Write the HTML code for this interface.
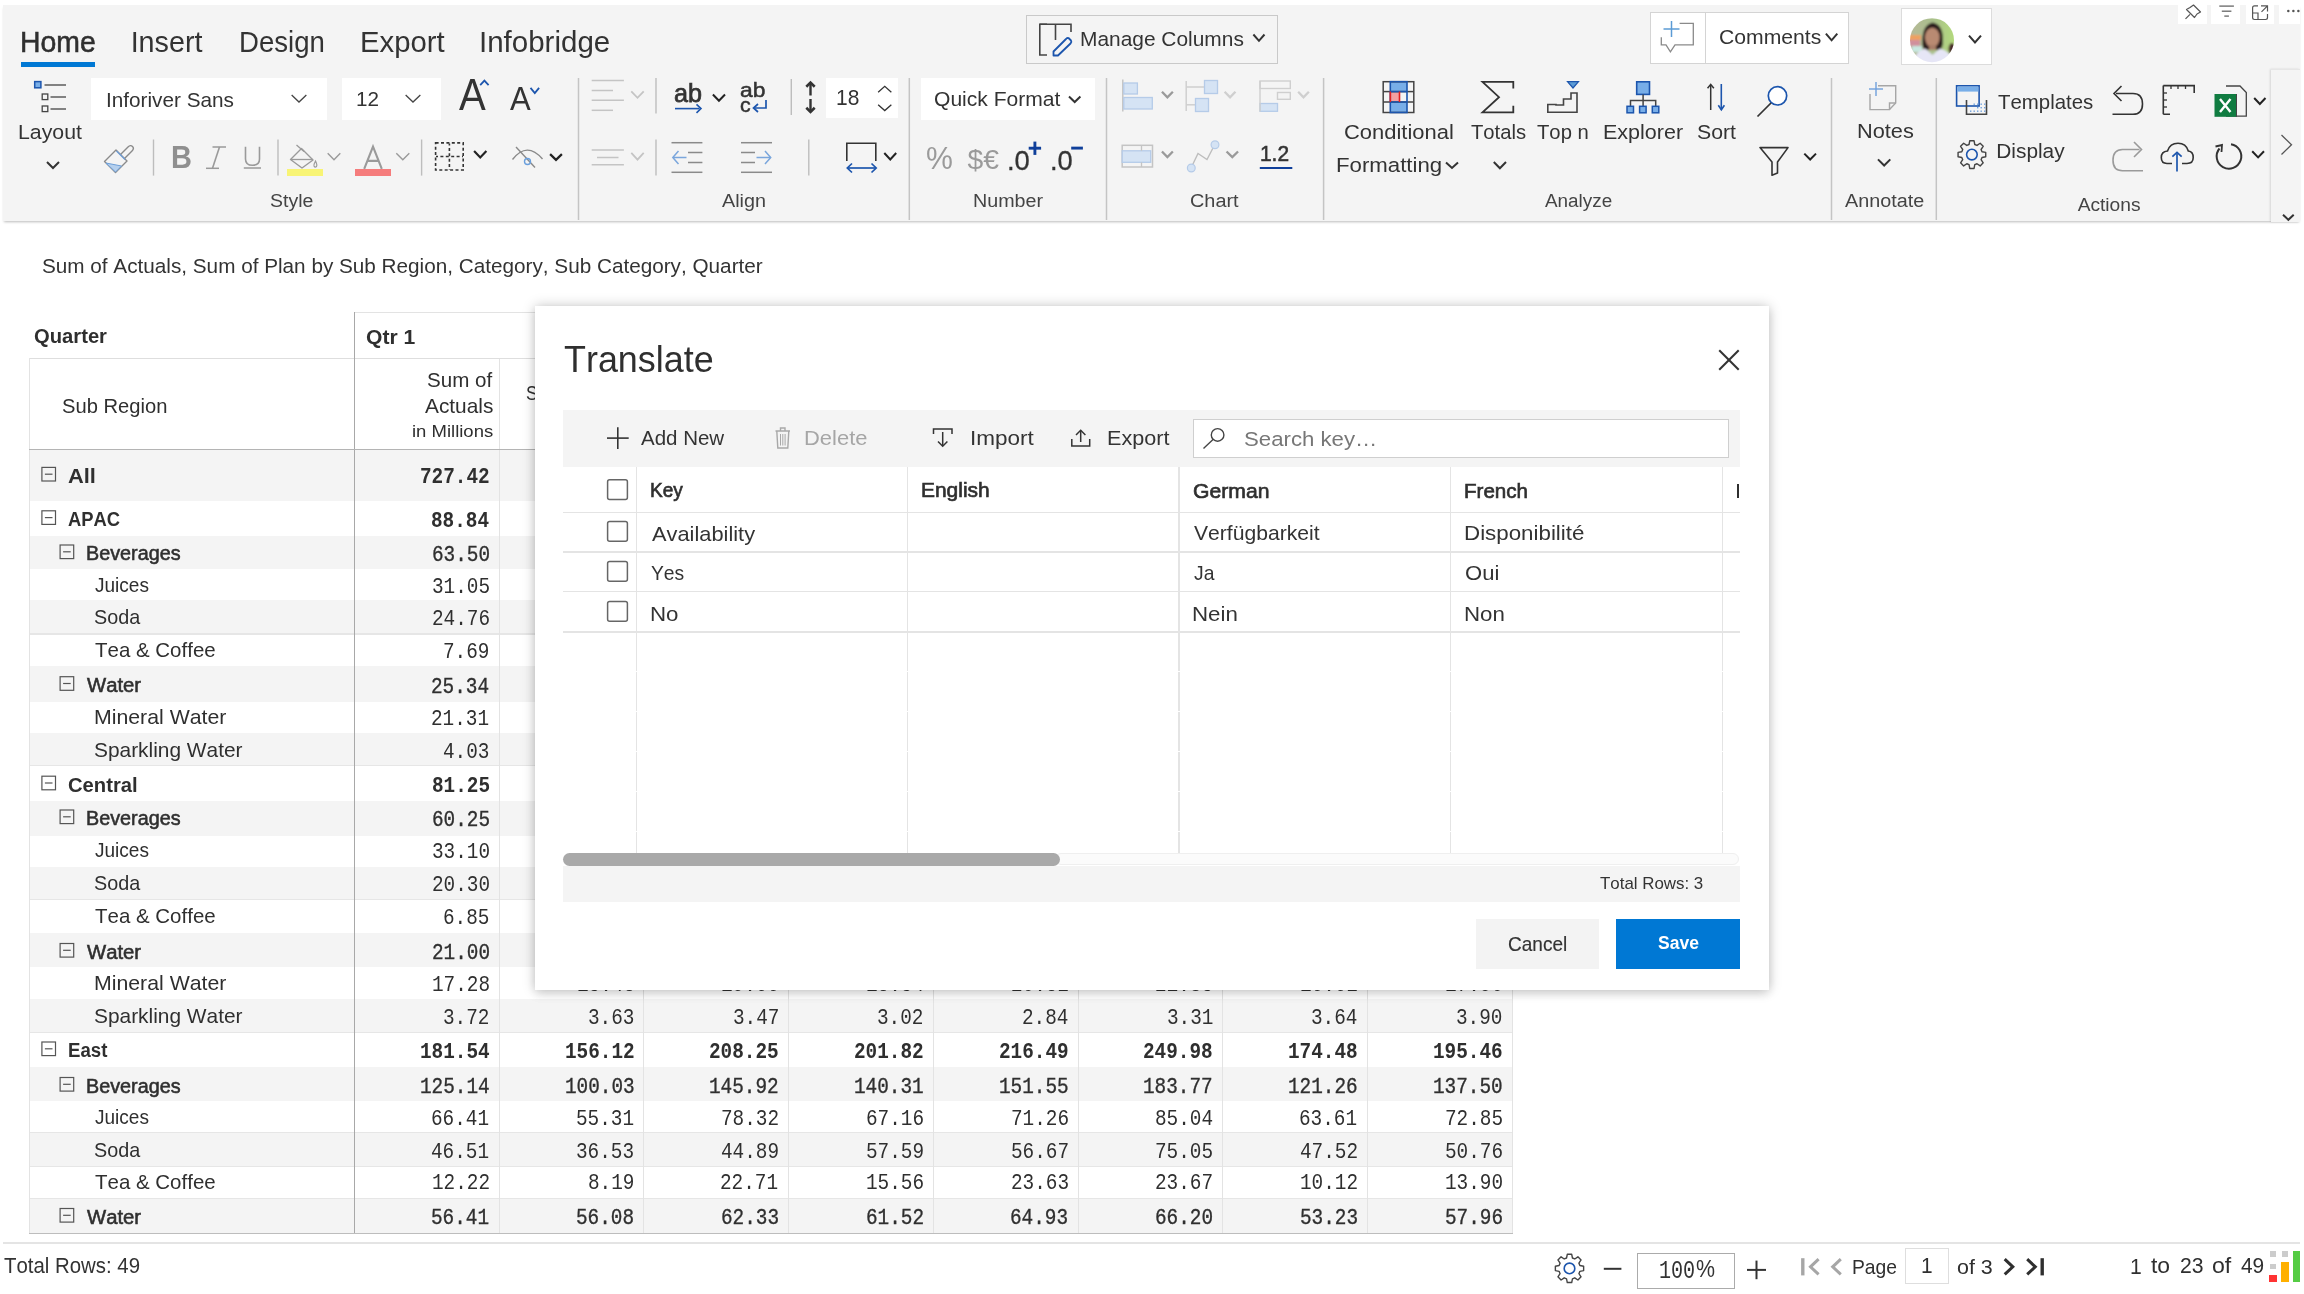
<!DOCTYPE html><html><head><meta charset="utf-8"><title>Translate</title><style>
html,body{margin:0;padding:0;width:2304px;height:1294px;overflow:hidden;background:#fff}
body{position:relative}
.t{position:absolute;white-space:pre;font-kerning:none;transform-origin:0 0}
.r{position:absolute}
svg.ov{position:absolute;left:0;top:0;width:2304px;height:1294px;overflow:visible}
</style></head><body><div id="root" style="position:absolute;left:0;top:0;width:2304px;height:1294px;will-change:transform">
<!-- ribbon -->
<div class="r" style="left:3.00px;top:5.00px;width:2297.00px;height:216.00px;background:#f4f4f4;box-shadow:0 2.2px 2.5px -1px rgba(0,0,0,0.27);"></div>
<div class="r" style="left:2178.00px;top:0.00px;width:28.80px;height:24.30px;background:#ffffff;"></div>
<div class="r" style="left:2211.40px;top:0.00px;width:29.10px;height:24.30px;background:#ffffff;"></div>
<div class="r" style="left:2245.70px;top:0.00px;width:28.30px;height:24.30px;background:#ffffff;"></div>
<div class="r" style="left:2278.80px;top:0.00px;width:21.20px;height:24.30px;background:#ffffff;"></div>
<div class="r" style="left:21.00px;top:62.00px;width:74.00px;height:5.00px;background:#0078d4;"></div>
<div class="r" style="left:1025.50px;top:15.10px;width:252.70px;height:48.60px;background:transparent;box-sizing:border-box;border:1.5px solid #c9c9c9;"></div>
<div class="r" style="left:1650.40px;top:11.50px;width:198.50px;height:52.00px;background:#fff;box-sizing:border-box;border:1.2px solid #d4d4d4;"></div>
<div class="r" style="left:1705.00px;top:11.50px;width:1.20px;height:52.00px;background:#d4d4d4;"></div>
<div class="r" style="left:1901.30px;top:8.30px;width:91.10px;height:56.80px;background:#fff;box-sizing:border-box;border:1.2px solid #dcdcdc;"></div>
<div class="r" style="left:91.30px;top:78.00px;width:235.70px;height:42.40px;background:#fff;"></div>
<div class="r" style="left:342.00px;top:78.00px;width:99.00px;height:42.40px;background:#fff;"></div>
<div class="r" style="left:287.00px;top:168.80px;width:36.00px;height:6.80px;background:#f8f475;"></div>
<div class="r" style="left:355.00px;top:168.80px;width:36.40px;height:6.80px;background:#f57c7c;"></div>
<div class="r" style="left:826.00px;top:78.00px;width:71.80px;height:39.50px;background:#fff;"></div>
<div class="r" style="left:921.00px;top:78.00px;width:173.80px;height:42.40px;background:#fff;"></div>
<div class="r" style="left:2271.00px;top:68.50px;width:29.00px;height:152.50px;background:#f4f4f4;box-shadow:-1.5px 0 2px rgba(0,0,0,0.12);border-top:1px solid #e6e6e6;"></div>
<svg class="ov" width="2304" height="1294" viewBox="0 0 2304 1294">
<path d="M2193.5,5 L2200.5,12 L2197,14 L2194.5,17.5 L2186.5,9.5 L2190,7.5 Z" fill="none" stroke="#555" stroke-width="1.2" stroke-linejoin="round"/>
<line x1="2185.50" y1="18.80" x2="2190.00" y2="14.30" stroke="#555" stroke-width="1.20" stroke-linecap="butt"/>
<line x1="2219.30" y1="6.10" x2="2233.90" y2="6.10" stroke="#666" stroke-width="1.30" stroke-linecap="butt"/>
<line x1="2221.80" y1="11.20" x2="2231.40" y2="11.20" stroke="#666" stroke-width="1.30" stroke-linecap="butt"/>
<line x1="2224.30" y1="16.10" x2="2228.90" y2="16.10" stroke="#666" stroke-width="1.30" stroke-linecap="butt"/>
<path d="M2258,5.8 H2254.5 Q2252.6,5.8 2252.6,7.7 V17.6 Q2252.6,19.5 2254.5,19.5 H2265.6 Q2267.5,19.5 2267.5,17.6 V14" fill="none" stroke="#555" stroke-width="1.2"/>
<path d="M2252.6,13 H2258 V19.5" fill="none" stroke="#555" stroke-width="1.2"/>
<path d="M2261,5.8 H2267.5 V11.5 M2267.5,5.8 L2261.5,11.8" fill="none" stroke="#555" stroke-width="1.2"/>
<circle cx="2288.3" cy="11" r="1.25" fill="#555"/>
<circle cx="2293.4" cy="11" r="1.25" fill="#555"/>
<circle cx="2298.4" cy="11" r="1.25" fill="#555"/>
<path d="M1047,24.3 H1039.8 V55 H1047" fill="none" stroke="#444" stroke-width="1.6"/>
<path d="M1039.8,24.3 H1071 V32 M1055.5,24.3 V40" fill="none" stroke="#444" stroke-width="1.6"/>
<path d="M1068.5,38 L1071,40.5 Q1072,42 1070.5,43.5 L1058,55.5 L1053.5,55.5 L1053.5,51.5 L1066,39 Q1067.3,37.5 1068.5,38 Z" fill="none" stroke="#1c55ad" stroke-width="1.8" stroke-linejoin="round"/>
<polyline points="1253.40,34.50 1258.95,40.80 1264.50,34.50" fill="none" stroke="#333" stroke-width="2.00" stroke-linecap="butt" stroke-linejoin="miter"/>
<path d="M1679.6,23.3 H1693.3 V44.8 H1675 L1670.4,51.8 L1666,44.8 H1661.3 V37.3" fill="none" stroke="#8a8a8a" stroke-width="1.3"/>
<line x1="1671.50" y1="21.00" x2="1671.50" y2="37.00" stroke="#5b9bd5" stroke-width="1.50" stroke-linecap="butt"/>
<line x1="1663.50" y1="29.00" x2="1679.50" y2="29.00" stroke="#5b9bd5" stroke-width="1.50" stroke-linecap="butt"/>
<polyline points="1825.90,33.60 1831.60,40.30 1837.30,33.60" fill="none" stroke="#333" stroke-width="2.00" stroke-linecap="butt" stroke-linejoin="miter"/>
<defs><clipPath id="avc"><circle cx="1932" cy="40.2" r="22"/></clipPath>
<linearGradient id="avbg" x1="0" y1="0" x2="1" y2="0"><stop offset="0" stop-color="#b8b89a"/><stop offset="0.5" stop-color="#a9bf8c"/><stop offset="1" stop-color="#b4dc7c"/></linearGradient></defs>
<filter id="avblur" x="-10%" y="-10%" width="120%" height="120%"><feGaussianBlur stdDeviation="0.9"/></filter><g clip-path="url(#avc)"><g filter="url(#avblur)">
<rect x="1908" y="17" width="48" height="48" fill="url(#avbg)"/>
<rect x="1908" y="35" width="13" height="5" fill="#eea060"/>
<rect x="1908" y="40" width="12" height="6" fill="#d0909c"/>
<rect x="1912" y="46" width="10" height="6" fill="#c8e8e0"/>
<path d="M1922.5,46 Q1921,25 1932.5,22.5 Q1944,24 1943,44 L1941,50 L1924,50 Z" fill="#2a1c1a"/>
<ellipse cx="1932.3" cy="37.5" rx="7.3" ry="9.8" fill="#b98a72"/>
<rect x="1929" y="45" width="7" height="5" fill="#a87d68"/>
<path d="M1913,64 Q1914,52 1925,48.5 L1932.5,55 L1940,48.5 Q1951,51 1954,64 Z" fill="#e6e6f6"/>
<ellipse cx="1952" cy="49" rx="3.5" ry="6" fill="#4a2a2a"/>
</g></g>
<polyline points="1969.00,35.70 1975.00,42.40 1981.00,35.70" fill="none" stroke="#333" stroke-width="2.00" stroke-linecap="butt" stroke-linejoin="miter"/>
<line x1="578.50" y1="78.00" x2="578.50" y2="220.00" stroke="#c4c4c4" stroke-width="1.50" stroke-linecap="butt"/>
<line x1="909.30" y1="78.00" x2="909.30" y2="220.00" stroke="#c4c4c4" stroke-width="1.50" stroke-linecap="butt"/>
<line x1="1106.50" y1="78.00" x2="1106.50" y2="220.00" stroke="#c4c4c4" stroke-width="1.50" stroke-linecap="butt"/>
<line x1="1323.60" y1="78.00" x2="1323.60" y2="220.00" stroke="#c4c4c4" stroke-width="1.50" stroke-linecap="butt"/>
<line x1="1831.50" y1="78.00" x2="1831.50" y2="220.00" stroke="#c4c4c4" stroke-width="1.50" stroke-linecap="butt"/>
<line x1="1936.30" y1="78.00" x2="1936.30" y2="220.00" stroke="#c4c4c4" stroke-width="1.50" stroke-linecap="butt"/>
<rect x="34.7" y="81.6" width="6.2" height="6.2" fill="#78aee8" stroke="#1c55ad" stroke-width="1.5"/>
<line x1="44.50" y1="85.00" x2="66.00" y2="85.00" stroke="#444" stroke-width="1.30" stroke-linecap="butt"/>
<rect x="42.2" y="94" width="5.6" height="5.6" fill="none" stroke="#444" stroke-width="1.3"/>
<rect x="42.2" y="106" width="5.6" height="5.6" fill="none" stroke="#444" stroke-width="1.3"/>
<line x1="50.50" y1="97.00" x2="66.00" y2="97.00" stroke="#444" stroke-width="1.30" stroke-linecap="butt"/>
<line x1="50.50" y1="109.00" x2="66.00" y2="109.00" stroke="#444" stroke-width="1.30" stroke-linecap="butt"/>
<polyline points="47.00,162.00 53.00,168.00 59.00,162.00" fill="none" stroke="#333" stroke-width="2.00" stroke-linecap="butt" stroke-linejoin="miter"/>
<polyline points="291.65,95.05 299.00,102.05 306.35,95.05" fill="none" stroke="#444" stroke-width="1.30" stroke-linecap="butt" stroke-linejoin="miter"/>
<polyline points="405.65,95.05 413.00,102.05 420.35,95.05" fill="none" stroke="#444" stroke-width="1.30" stroke-linecap="butt" stroke-linejoin="miter"/>
<polyline points="480.20,85.10 484.40,80.60 488.60,85.10" fill="none" stroke="#1c55ad" stroke-width="1.80" stroke-linejoin="miter"/>
<polyline points="530.50,87.90 534.80,93.10 539.10,87.90" fill="none" stroke="#1c55ad" stroke-width="1.80" stroke-linecap="butt" stroke-linejoin="miter"/>
<path d="M104.5,161.5 L116,150 L127,161 L115.5,172.5 Z" fill="none" stroke="#8a8a8a" stroke-width="1.4" stroke-linejoin="round"/>
<path d="M106,163 L121.5,166 L115.5,172 Z" fill="#b5d0ee" stroke="#6e9fd8" stroke-width="1"/>
<path d="M120,155 L128,147 Q130.5,144.5 132.5,146.5 Q134.5,148.5 132,151 L124,159" fill="none" stroke="#8a8a8a" stroke-width="1.4" stroke-linejoin="round"/>
<line x1="116.50" y1="151.00" x2="125.00" y2="159.50" stroke="#6e9fd8" stroke-width="1.20" stroke-linecap="butt"/>
<line x1="153.50" y1="139.50" x2="153.50" y2="175.60" stroke="#bdbdbd" stroke-width="1.40" stroke-linecap="butt"/>
<line x1="212.50" y1="147.00" x2="226.00" y2="147.00" stroke="#9a9a9a" stroke-width="1.50" stroke-linecap="butt"/>
<line x1="206.00" y1="168.30" x2="219.00" y2="168.30" stroke="#9a9a9a" stroke-width="1.50" stroke-linecap="butt"/>
<line x1="219.50" y1="147.00" x2="212.50" y2="168.30" stroke="#9a9a9a" stroke-width="1.60" stroke-linecap="butt"/>
<path d="M245.5,146.7 V159 Q245.5,165.3 252.5,165.3 Q259.5,165.3 259.5,159 V146.7" fill="none" stroke="#9a9a9a" stroke-width="1.6"/>
<line x1="243.80" y1="168.00" x2="261.00" y2="168.00" stroke="#9a9a9a" stroke-width="1.50" stroke-linecap="butt"/>
<line x1="278.00" y1="139.50" x2="278.00" y2="175.60" stroke="#bdbdbd" stroke-width="1.40" stroke-linecap="butt"/>
<path d="M290.5,159.5 L301.5,148.5 L313,160 L302,168 Z" fill="none" stroke="#9a9a9a" stroke-width="1.4" stroke-linejoin="round"/>
<line x1="291.00" y1="159.50" x2="313.00" y2="159.50" stroke="#9a9a9a" stroke-width="1.30" stroke-linecap="butt"/>
<line x1="296.50" y1="145.00" x2="304.00" y2="151.50" stroke="#9a9a9a" stroke-width="1.30" stroke-linecap="butt"/>
<path d="M315.5,161 Q313.5,164.5 314,166 Q315,168 316.5,166.5 Q317.5,165 315.5,161 Z" fill="none" stroke="#9a9a9a" stroke-width="1.2"/>
<polyline points="327.70,153.30 334.00,159.80 340.30,153.30" fill="none" stroke="#9a9a9a" stroke-width="1.40" stroke-linecap="butt" stroke-linejoin="miter"/>
<path d="M364.2,168.8 L373,146.5 L381.8,168.8 M367.3,160.9 H378.7" fill="none" stroke="#9a9a9a" stroke-width="2.1"/>
<polyline points="396.30,153.30 402.80,159.80 409.30,153.30" fill="none" stroke="#9a9a9a" stroke-width="1.40" stroke-linecap="butt" stroke-linejoin="miter"/>
<line x1="421.60" y1="139.50" x2="421.60" y2="175.60" stroke="#bdbdbd" stroke-width="1.40" stroke-linecap="butt"/>
<path d="M435.6,142.9 H463.2 V170 H435.6 Z" fill="none" stroke="#333" stroke-width="1.6" stroke-dasharray="3,2.4" stroke-linecap="butt"/>
<line x1="449.4" y1="143.5" x2="449.4" y2="170" stroke="#333" stroke-width="1.6" stroke-dasharray="3,2.4" stroke-dashoffset="1"/>
<line x1="436" y1="156.5" x2="463" y2="156.5" stroke="#333" stroke-width="1.6" stroke-dasharray="3,2.4" stroke-dashoffset="1"/>
<polyline points="474.10,151.10 480.25,157.40 486.40,151.10" fill="none" stroke="#222" stroke-width="2.20" stroke-linecap="butt" stroke-linejoin="miter"/>
<path d="M512.5,159.5 Q527,141 542.5,159" fill="none" stroke="#8a8a8a" stroke-width="1.4"/>
<line x1="516.00" y1="147.00" x2="535.00" y2="167.50" stroke="#8a8a8a" stroke-width="1.40" stroke-linecap="butt"/>
<circle cx="527.5" cy="161.5" r="3" fill="none" stroke="#6a9fdc" stroke-width="1.4"/>
<polyline points="550.10,154.10 556.00,159.90 561.90,154.10" fill="none" stroke="#222" stroke-width="2.20" stroke-linecap="butt" stroke-linejoin="miter"/>
<line x1="591.70" y1="80.40" x2="623.90" y2="80.40" stroke="#c4c4c4" stroke-width="1.50" stroke-linecap="butt"/>
<line x1="591.70" y1="90.50" x2="613.00" y2="90.50" stroke="#c4c4c4" stroke-width="1.50" stroke-linecap="butt"/>
<line x1="591.70" y1="100.30" x2="623.90" y2="100.30" stroke="#c4c4c4" stroke-width="1.50" stroke-linecap="butt"/>
<line x1="591.70" y1="110.30" x2="613.00" y2="110.30" stroke="#c4c4c4" stroke-width="1.50" stroke-linecap="butt"/>
<polyline points="631.30,91.40 637.50,97.80 643.70,91.40" fill="none" stroke="#c4c4c4" stroke-width="1.80" stroke-linecap="butt" stroke-linejoin="miter"/>
<line x1="656.00" y1="78.00" x2="656.00" y2="113.60" stroke="#bdbdbd" stroke-width="1.40" stroke-linecap="butt"/>
<line x1="675.00" y1="108.60" x2="699.50" y2="108.60" stroke="#1c55ad" stroke-width="1.60" stroke-linecap="butt"/>
<polyline points="696.5,104.3 701,108.6 696.5,112.9" fill="none" stroke="#1c55ad" stroke-width="1.6"/>
<polyline points="712.90,94.50 718.95,100.80 725.00,94.50" fill="none" stroke="#222" stroke-width="2.00" stroke-linecap="butt" stroke-linejoin="miter"/>
<path d="M766,100 V108 H754" fill="none" stroke="#1c55ad" stroke-width="1.7"/>
<polyline points="758,104 753.5,108 758,112" fill="none" stroke="#1c55ad" stroke-width="1.7"/>
<line x1="791.30" y1="79.00" x2="791.30" y2="115.00" stroke="#bdbdbd" stroke-width="1.40" stroke-linecap="butt"/>
<line x1="810.50" y1="84.00" x2="810.50" y2="95.50" stroke="#333" stroke-width="2.40" stroke-linecap="butt"/>
<line x1="810.50" y1="99.00" x2="810.50" y2="110.50" stroke="#333" stroke-width="2.40" stroke-linecap="butt"/>
<polyline points="806.30,86.70 810.50,82.60 814.70,86.70" fill="none" stroke="#333" stroke-width="2.60" stroke-linejoin="miter"/>
<polyline points="806.30,107.80 810.50,111.90 814.70,107.80" fill="none" stroke="#333" stroke-width="2.60" stroke-linecap="butt" stroke-linejoin="miter"/>
<polyline points="878.15,92.15 884.75,86.25 891.35,92.15" fill="none" stroke="#333" stroke-width="1.30" stroke-linejoin="miter"/>
<polyline points="878.15,104.65 884.75,110.55 891.35,104.65" fill="none" stroke="#333" stroke-width="1.30" stroke-linecap="butt" stroke-linejoin="miter"/>
<line x1="591.70" y1="150.00" x2="623.90" y2="150.00" stroke="#c4c4c4" stroke-width="1.50" stroke-linecap="butt"/>
<line x1="597.00" y1="157.50" x2="618.50" y2="157.50" stroke="#c4c4c4" stroke-width="1.50" stroke-linecap="butt"/>
<line x1="591.70" y1="164.70" x2="623.90" y2="164.70" stroke="#c4c4c4" stroke-width="1.50" stroke-linecap="butt"/>
<polyline points="631.30,152.90 637.50,159.60 643.70,152.90" fill="none" stroke="#c4c4c4" stroke-width="1.80" stroke-linecap="butt" stroke-linejoin="miter"/>
<line x1="656.00" y1="139.50" x2="656.00" y2="175.60" stroke="#bdbdbd" stroke-width="1.40" stroke-linecap="butt"/>
<line x1="671.50" y1="142.70" x2="702.40" y2="142.70" stroke="#8a8a8a" stroke-width="1.50" stroke-linecap="butt"/>
<line x1="688.00" y1="152.50" x2="702.40" y2="152.50" stroke="#8a8a8a" stroke-width="1.50" stroke-linecap="butt"/>
<line x1="688.00" y1="162.50" x2="702.40" y2="162.50" stroke="#8a8a8a" stroke-width="1.50" stroke-linecap="butt"/>
<line x1="671.50" y1="172.30" x2="702.40" y2="172.30" stroke="#8a8a8a" stroke-width="1.50" stroke-linecap="butt"/>
<line x1="673.00" y1="157.50" x2="686.50" y2="157.50" stroke="#7aa6dc" stroke-width="1.50" stroke-linecap="butt"/>
<polyline points="678.5,151 672.8,157.5 678.5,164" fill="none" stroke="#7aa6dc" stroke-width="1.5"/>
<line x1="741.00" y1="142.70" x2="772.00" y2="142.70" stroke="#8a8a8a" stroke-width="1.50" stroke-linecap="butt"/>
<line x1="741.00" y1="152.50" x2="755.00" y2="152.50" stroke="#8a8a8a" stroke-width="1.50" stroke-linecap="butt"/>
<line x1="741.00" y1="162.50" x2="755.00" y2="162.50" stroke="#8a8a8a" stroke-width="1.50" stroke-linecap="butt"/>
<line x1="741.00" y1="172.30" x2="772.00" y2="172.30" stroke="#8a8a8a" stroke-width="1.50" stroke-linecap="butt"/>
<line x1="756.50" y1="157.50" x2="770.50" y2="157.50" stroke="#7aa6dc" stroke-width="1.50" stroke-linecap="butt"/>
<polyline points="765,151 770.7,157.5 765,164" fill="none" stroke="#7aa6dc" stroke-width="1.5"/>
<line x1="808.80" y1="139.50" x2="808.80" y2="175.60" stroke="#bdbdbd" stroke-width="1.40" stroke-linecap="butt"/>
<path d="M846.8,161 V143.3 H875.8 V161" fill="none" stroke="#333" stroke-width="1.6"/>
<line x1="847.50" y1="168.00" x2="876.00" y2="168.00" stroke="#1c55ad" stroke-width="1.70" stroke-linecap="butt"/>
<polyline points="852,163.5 847.3,168 852,172.5" fill="none" stroke="#1c55ad" stroke-width="1.7"/>
<polyline points="871.5,163.5 876.2,168 871.5,172.5" fill="none" stroke="#1c55ad" stroke-width="1.7"/>
<polyline points="884.30,153.00 890.25,159.50 896.20,153.00" fill="none" stroke="#222" stroke-width="2.00" stroke-linecap="butt" stroke-linejoin="miter"/>
<polyline points="1069.00,96.50 1074.70,102.00 1080.40,96.50" fill="none" stroke="#333" stroke-width="2.00" stroke-linecap="butt" stroke-linejoin="miter"/>
<line x1="1028.70" y1="148.20" x2="1041.10" y2="148.20" stroke="#0f3f9a" stroke-width="2.90" stroke-linecap="butt"/>
<line x1="1034.90" y1="141.60" x2="1034.90" y2="154.90" stroke="#0f3f9a" stroke-width="2.90" stroke-linecap="butt"/>
<line x1="1071.20" y1="148.10" x2="1082.90" y2="148.10" stroke="#0f3f9a" stroke-width="2.90" stroke-linecap="butt"/>
<line x1="1122.80" y1="79.50" x2="1122.80" y2="111.60" stroke="#c4c4c4" stroke-width="1.50" stroke-linecap="butt"/>
<rect x="1123.8" y="83" width="13.6" height="11" fill="#d5e3f4" stroke="#b5cbe8" stroke-width="1.3"/>
<rect x="1123.8" y="97.5" width="28.5" height="11.5" fill="#d5e3f4" stroke="#b5cbe8" stroke-width="1.3"/>
<polyline points="1161.95,91.75 1167.40,97.35 1172.85,91.75" fill="none" stroke="#9a9a9a" stroke-width="2.30" stroke-linecap="butt" stroke-linejoin="miter"/>
<line x1="1186.20" y1="81.00" x2="1186.20" y2="111.00" stroke="#cfcfcf" stroke-width="1.50" stroke-linecap="butt"/>
<line x1="1186.20" y1="87.00" x2="1204.00" y2="87.00" stroke="#cfcfcf" stroke-width="1.50" stroke-linecap="butt"/>
<line x1="1186.20" y1="104.80" x2="1195.00" y2="104.80" stroke="#cfcfcf" stroke-width="1.50" stroke-linecap="butt"/>
<rect x="1204.5" y="80.5" width="13" height="13" fill="#d5e3f4" stroke="#b5cbe8" stroke-width="1.3"/>
<rect x="1195.5" y="98.5" width="13" height="13" fill="#d5e3f4" stroke="#b5cbe8" stroke-width="1.3"/>
<polyline points="1224.65,91.75 1230.05,97.35 1235.45,91.75" fill="none" stroke="#cfcfcf" stroke-width="2.30" stroke-linecap="butt" stroke-linejoin="miter"/>
<rect x="1260" y="81" width="30.3" height="7.5" fill="none" stroke="#cfcfcf" stroke-width="1.4"/>
<rect x="1277.5" y="92.5" width="12.8" height="6.8" fill="none" stroke="#cfcfcf" stroke-width="1.4"/>
<rect x="1260" y="103.5" width="17.5" height="7.8" fill="#d5e3f4" stroke="#b5cbe8" stroke-width="1.3"/>
<line x1="1260.00" y1="81.00" x2="1260.00" y2="111.50" stroke="#cfcfcf" stroke-width="1.40" stroke-linecap="butt"/>
<polyline points="1298.15,91.75 1303.50,97.35 1308.85,91.75" fill="none" stroke="#cfcfcf" stroke-width="2.30" stroke-linecap="butt" stroke-linejoin="miter"/>
<rect x="1122.2" y="145.3" width="30.3" height="21.7" fill="none" stroke="#c4c4c4" stroke-width="1.5"/>
<rect x="1122.2" y="150.8" width="28.5" height="11.5" fill="#d5e3f4" stroke="#b5cbe8" stroke-width="1.3"/>
<line x1="1141.50" y1="145.30" x2="1141.50" y2="150.80" stroke="#c4c4c4" stroke-width="1.30" stroke-linecap="butt"/>
<line x1="1141.50" y1="162.30" x2="1141.50" y2="167.00" stroke="#c4c4c4" stroke-width="1.30" stroke-linecap="butt"/>
<polyline points="1161.95,151.55 1167.40,157.15 1172.85,151.55" fill="none" stroke="#9a9a9a" stroke-width="2.30" stroke-linecap="butt" stroke-linejoin="miter"/>
<polyline points="1192,166 1198,153.5 1207,159.5 1213.5,147" fill="none" stroke="#bdbdbd" stroke-width="1.4"/>
<circle cx="1191.3" cy="168" r="3.9" fill="#d5e3f4" stroke="#b5cbe8" stroke-width="1.2"/>
<circle cx="1215" cy="144.8" r="3.9" fill="#d5e3f4" stroke="#b5cbe8" stroke-width="1.2"/>
<polyline points="1226.55,151.55 1232.30,157.15 1238.05,151.55" fill="none" stroke="#9a9a9a" stroke-width="2.30" stroke-linecap="butt" stroke-linejoin="miter"/>
<line x1="1259.80" y1="168.00" x2="1292.30" y2="168.00" stroke="#0f3f9a" stroke-width="1.80" stroke-linecap="butt"/>
<rect x="1390.5" y="81.5" width="16.5" height="10" fill="#78aee8"/>
<rect x="1390.5" y="102" width="16.5" height="10.8" fill="#78aee8"/>
<rect x="1390.5" y="91.6" width="9" height="10.4" fill="#f4a0a0"/>
<rect x="1383.2" y="81.7" width="30.6" height="30.8" fill="none" stroke="#444" stroke-width="1.5"/>
<line x1="1383.20" y1="91.60" x2="1413.80" y2="91.60" stroke="#444" stroke-width="1.50" stroke-linecap="butt"/>
<line x1="1383.20" y1="102.00" x2="1413.80" y2="102.00" stroke="#444" stroke-width="1.50" stroke-linecap="butt"/>
<rect x="1390.3" y="81.7" width="16.7" height="30.8" fill="none" stroke="#1c55ad" stroke-width="1.6"/>
<line x1="1390.30" y1="91.60" x2="1407.00" y2="91.60" stroke="#1c55ad" stroke-width="1.60" stroke-linecap="butt"/>
<line x1="1390.30" y1="102.00" x2="1407.00" y2="102.00" stroke="#1c55ad" stroke-width="1.60" stroke-linecap="butt"/>
<path d="M1390.3,91.6 V102 M1399.5,91.6 V102" fill="none" stroke="#e02020" stroke-width="1.6"/>
<polyline points="1446.00,162.40 1452.00,168.00 1458.00,162.40" fill="none" stroke="#333" stroke-width="2.00" stroke-linecap="butt" stroke-linejoin="miter"/>
<path d="M1513.3,88.5 V81.8 H1482.5 L1499,97.2 L1482.5,112.4 H1513.3 V105.8" fill="none" stroke="#333" stroke-width="1.8" stroke-linejoin="miter"/>
<polyline points="1493.80,162.00 1499.90,168.30 1506.00,162.00" fill="none" stroke="#333" stroke-width="2.00" stroke-linecap="butt" stroke-linejoin="miter"/>
<path d="M1547.8,112.3 H1577 V93 H1571 V99 H1563.5 V105 H1556 V104.5 H1547.8 Z" fill="none" stroke="#444" stroke-width="1.6"/>
<path d="M1567.5,81.6 H1578.5 L1573,88 Z" fill="#5b9bd5" stroke="#1c55ad" stroke-width="1.2"/>
<rect x="1636.7" y="81.8" width="12.8" height="12.6" fill="#78aee8" stroke="#1c55ad" stroke-width="1.6"/>
<path d="M1643.1,94.4 V109.8 M1630.5,109.8 V100.5 H1655.7 V109.8" fill="none" stroke="#444" stroke-width="1.5"/>
<rect x="1627.0" y="106.3" width="6.5" height="6.5" fill="#78aee8" stroke="#1c55ad" stroke-width="1.5"/>
<rect x="1639.6" y="106.3" width="6.5" height="6.5" fill="#78aee8" stroke="#1c55ad" stroke-width="1.5"/>
<rect x="1652.3" y="106.3" width="6.5" height="6.5" fill="#78aee8" stroke="#1c55ad" stroke-width="1.5"/>
<line x1="1710.70" y1="85.00" x2="1710.70" y2="110.00" stroke="#333" stroke-width="1.50" stroke-linecap="butt"/>
<polyline points="1707.55,88.25 1710.70,84.35 1713.85,88.25" fill="none" stroke="#333" stroke-width="1.50" stroke-linejoin="miter"/>
<line x1="1721.30" y1="84.00" x2="1721.30" y2="109.50" stroke="#1c55ad" stroke-width="1.60" stroke-linecap="butt"/>
<polyline points="1718.30,105.30 1721.35,109.80 1724.40,105.30" fill="none" stroke="#1c55ad" stroke-width="1.60" stroke-linecap="butt" stroke-linejoin="miter"/>
<circle cx="1777.5" cy="95.8" r="9.2" fill="#fff" stroke="#1c55ad" stroke-width="1.7"/>
<line x1="1757.50" y1="116.50" x2="1771.00" y2="103.00" stroke="#333" stroke-width="1.70" stroke-linecap="butt"/>
<path d="M1760,147.6 H1788 L1777.5,162 V173 L1772,175.2 V162 Z" fill="none" stroke="#333" stroke-width="1.6" stroke-linejoin="round"/>
<polyline points="1804.30,153.60 1810.15,159.50 1816.00,153.60" fill="none" stroke="#222" stroke-width="2.00" stroke-linecap="butt" stroke-linejoin="miter"/>
<path d="M1878,85.8 H1895.7 V103 L1889.5,109.6 H1870 V94" fill="none" stroke="#a6a6a6" stroke-width="1.4"/>
<path d="M1895.7,103 H1889.5 V109.6" fill="none" stroke="#a6a6a6" stroke-width="1.4"/>
<line x1="1876.00" y1="82.00" x2="1876.00" y2="96.00" stroke="#6fa0dc" stroke-width="1.40" stroke-linecap="butt"/>
<line x1="1869.00" y1="89.00" x2="1883.00" y2="89.00" stroke="#6fa0dc" stroke-width="1.40" stroke-linecap="butt"/>
<polyline points="1878.00,159.40 1884.15,165.50 1890.30,159.40" fill="none" stroke="#333" stroke-width="2.00" stroke-linecap="butt" stroke-linejoin="miter"/>
<rect x="1956.6" y="85.8" width="22.5" height="20.2" fill="none" stroke="#1c55ad" stroke-width="1.6"/>
<rect x="1957.4" y="86.6" width="20.9" height="5" fill="#78aee8"/>
<path d="M1966.5,100 V114.2 H1986.5 V100" fill="none" stroke="#444" stroke-width="1.6"/>
<rect x="1973.5" y="103.5" width="1.4" height="1.4" fill="#6fa0dc"/>
<rect x="1977.0" y="103.5" width="1.4" height="1.4" fill="#6fa0dc"/>
<rect x="1980.5" y="103.5" width="1.4" height="1.4" fill="#6fa0dc"/>
<rect x="1984.0" y="103.5" width="1.4" height="1.4" fill="#6fa0dc"/>
<rect x="1977.0" y="107.0" width="1.4" height="1.4" fill="#6fa0dc"/>
<rect x="1980.5" y="107.0" width="1.4" height="1.4" fill="#6fa0dc"/>
<rect x="1984.0" y="107.0" width="1.4" height="1.4" fill="#6fa0dc"/>
<rect x="1970.0" y="110.5" width="1.4" height="1.4" fill="#6fa0dc"/>
<rect x="1973.5" y="110.5" width="1.4" height="1.4" fill="#6fa0dc"/>
<rect x="1977.0" y="110.5" width="1.4" height="1.4" fill="#6fa0dc"/>
<rect x="1980.5" y="110.5" width="1.4" height="1.4" fill="#6fa0dc"/>
<rect x="1984.0" y="110.5" width="1.4" height="1.4" fill="#6fa0dc"/>
<path d="M2116,93.5 H2133 Q2142.5,93.5 2142.5,104 Q2142.5,114.3 2133,114.3 H2112.5" fill="none" stroke="#333" stroke-width="1.6"/>
<polyline points="2121.5,86 2114,93.5 2121.5,101" fill="none" stroke="#333" stroke-width="1.6"/>
<path d="M2163.3,85.6 V114.3 M2163.3,85.6 H2194.2 V93 M2163.3,114.3 H2170" fill="none" stroke="#333" stroke-width="1.6"/>
<line x1="2171.00" y1="85.60" x2="2171.00" y2="89.00" stroke="#333" stroke-width="1.30" stroke-linecap="butt"/>
<line x1="2178.00" y1="85.60" x2="2178.00" y2="89.00" stroke="#333" stroke-width="1.30" stroke-linecap="butt"/>
<line x1="2185.50" y1="85.60" x2="2185.50" y2="89.00" stroke="#333" stroke-width="1.30" stroke-linecap="butt"/>
<line x1="2163.30" y1="93.00" x2="2167.00" y2="93.00" stroke="#333" stroke-width="1.30" stroke-linecap="butt"/>
<line x1="2163.30" y1="100.00" x2="2167.00" y2="100.00" stroke="#333" stroke-width="1.30" stroke-linecap="butt"/>
<line x1="2163.30" y1="107.00" x2="2167.00" y2="107.00" stroke="#333" stroke-width="1.30" stroke-linecap="butt"/>
<path d="M2226,86 H2240 L2246.3,92.5 V116.2 H2226" fill="none" stroke="#444" stroke-width="1.3"/>
<rect x="2214.5" y="94" width="22" height="22.8" fill="#107c41"/>
<line x1="2236.50" y1="94.00" x2="2236.50" y2="116.80" stroke="#444" stroke-width="1.00" stroke-linecap="butt"/>
<path d="M2220,99 L2230.5,112 M2230.5,99 L2220,112" stroke="#fff" stroke-width="2.4"/>
<polyline points="2254.20,98.00 2259.85,104.00 2265.50,98.00" fill="none" stroke="#222" stroke-width="2.00" stroke-linecap="butt" stroke-linejoin="miter"/>
<path d="M1982.00,151.73 L1985.73,152.43 L1985.73,156.77 L1982.00,157.47 L1981.07,159.72 L1983.21,162.85 L1980.15,165.91 L1977.02,163.77 L1974.77,164.70 L1974.07,168.43 L1969.73,168.43 L1969.03,164.70 L1966.78,163.77 L1963.65,165.91 L1960.59,162.85 L1962.73,159.72 L1961.80,157.47 L1958.07,156.77 L1958.07,152.43 L1961.80,151.73 L1962.73,149.48 L1960.59,146.35 L1963.65,143.29 L1966.78,145.43 L1969.03,144.50 L1969.73,140.77 L1974.07,140.77 L1974.77,144.50 L1977.02,145.43 L1980.15,143.29 L1983.21,146.35 L1981.07,149.48 Z" fill="none" stroke="#444" stroke-width="1.40" stroke-linejoin="round"/>
<circle cx="1971.90" cy="154.60" r="5.30" fill="none" stroke="#1c55ad" stroke-width="1.60"/>
<path d="M2139.5,149.5 H2122.5 Q2113,149.5 2113,160.3 Q2113,170.8 2122.5,170.8 H2143" fill="none" stroke="#9a9a9a" stroke-width="1.6"/>
<polyline points="2134,142 2141.5,149.5 2134,157" fill="none" stroke="#9a9a9a" stroke-width="1.6"/>
<path d="M2172,163.5 H2167 Q2161.3,163.5 2161.3,157.5 Q2161.3,151.5 2167.5,151 Q2170,143.3 2178,143.3 Q2186,143.3 2188.3,151 Q2193.2,151.5 2193.2,157.5 Q2193.2,163.5 2187,163.5 H2182" fill="none" stroke="#333" stroke-width="1.6"/>
<line x1="2177.00" y1="153.50" x2="2177.00" y2="171.50" stroke="#1c55ad" stroke-width="1.70" stroke-linecap="butt"/>
<polyline points="2172.35,156.65 2177.00,152.35 2181.65,156.65" fill="none" stroke="#1c55ad" stroke-width="1.70" stroke-linejoin="miter"/>
<path d="M2219.5,148.5 A12.3,12.3 0 1 0 2231,144.2" fill="none" stroke="#333" stroke-width="2"/>
<path d="M2215.5,146.5 L2222,145 L2221.5,152" fill="none" stroke="#333" stroke-width="1.8"/>
<polyline points="2252.20,151.30 2258.10,157.40 2264.00,151.30" fill="none" stroke="#222" stroke-width="2.00" stroke-linecap="butt" stroke-linejoin="miter"/>
<polyline points="2281.5,135 2291.5,144.7 2281.5,154.5" fill="none" stroke="#555" stroke-width="1.3"/>
<polyline points="2283.00,214.80 2288.35,219.80 2293.70,214.80" fill="none" stroke="#333" stroke-width="2.00" stroke-linecap="butt" stroke-linejoin="miter"/>
</svg>
<div class="t" style="left:19.80px;top:28.48px;font-family:'Liberation Sans', sans-serif;font-size:28.721px;line-height:28.721px;color:#2f2f2f;-webkit-text-stroke:0.55px #2f2f2f;transform:scaleX(0.9887);">Home</div>
<div class="t" style="left:130.63px;top:28.48px;font-family:'Liberation Sans', sans-serif;font-size:28.721px;line-height:28.721px;color:#333;">Insert</div>
<div class="t" style="left:239.09px;top:28.48px;font-family:'Liberation Sans', sans-serif;font-size:28.721px;line-height:28.721px;color:#333;transform:scaleX(0.9600);">Design</div>
<div class="t" style="left:359.67px;top:28.48px;font-family:'Liberation Sans', sans-serif;font-size:28.721px;line-height:28.721px;color:#333;transform:scaleX(1.0200);">Export</div>
<div class="t" style="left:479.27px;top:28.48px;font-family:'Liberation Sans', sans-serif;font-size:28.721px;line-height:28.721px;color:#333;transform:scaleX(1.0270);">Infobridge</div>
<div class="t" style="left:1080.28px;top:28.95px;font-family:'Liberation Sans', sans-serif;font-size:20.850px;line-height:20.850px;color:#333;transform:scaleX(1.0030);">Manage Columns</div>
<div class="t" style="left:1718.95px;top:27.00px;font-family:'Liberation Sans', sans-serif;font-size:20.436px;line-height:20.436px;color:#333;transform:scaleX(1.0357);">Comments</div>
<div class="t" style="left:18.25px;top:121.85px;font-family:'Liberation Sans', sans-serif;font-size:20.850px;line-height:20.850px;color:#333;transform:scaleX(1.0216);">Layout</div>
<div class="t" style="left:105.57px;top:88.93px;font-family:'Liberation Sans', sans-serif;font-size:20.988px;line-height:20.988px;color:#333;transform:scaleX(0.9890);">Inforiver Sans</div>
<div class="t" style="left:356.01px;top:88.95px;font-family:'Liberation Sans', sans-serif;font-size:20.850px;line-height:20.850px;color:#333;transform:scaleX(0.9909);">12</div>
<div class="t" style="left:458.63px;top:74.08px;font-family:'Liberation Sans', sans-serif;font-size:43.605px;line-height:43.605px;color:#333;transform:scaleX(0.9200);">A</div>
<div class="t" style="left:510.03px;top:82.45px;font-family:'Liberation Sans', sans-serif;font-size:33.721px;line-height:33.721px;color:#333;transform:scaleX(0.9209);">A</div>
<div class="t" style="left:171.22px;top:141.69px;font-family:'Liberation Sans', sans-serif;font-size:31.541px;line-height:31.541px;color:#8f8f8f;font-weight:700;transform:scaleX(0.9200);">B</div>
<div class="t" style="left:270.05px;top:190.95px;font-family:'Liberation Sans', sans-serif;font-size:19.193px;line-height:19.193px;color:#444;transform:scaleX(1.0161);">Style</div>
<div class="t" style="left:674.11px;top:79.74px;font-family:'Liberation Sans', sans-serif;font-size:26.650px;line-height:26.650px;color:#333;-webkit-text-stroke:0.75px #333;transform:scaleX(0.9454);">ab</div>
<div class="t" style="left:740.10px;top:78.91px;font-family:'Liberation Sans', sans-serif;font-size:21.126px;line-height:21.126px;color:#333;-webkit-text-stroke:0.50px #333;transform:scaleX(1.0800);">ab</div>
<div class="t" style="left:740.16px;top:94.16px;font-family:'Liberation Sans', sans-serif;font-size:21.076px;line-height:21.076px;color:#333;-webkit-text-stroke:0.50px #333;transform:scaleX(1.0088);">c</div>
<div class="t" style="left:836.02px;top:87.88px;font-family:'Liberation Sans', sans-serif;font-size:21.403px;line-height:21.403px;color:#333;transform:scaleX(0.9799);">18</div>
<div class="t" style="left:722.44px;top:190.95px;font-family:'Liberation Sans', sans-serif;font-size:19.193px;line-height:19.193px;color:#444;transform:scaleX(1.0299);">Align</div>
<div class="t" style="left:933.58px;top:88.95px;font-family:'Liberation Sans', sans-serif;font-size:20.850px;line-height:20.850px;color:#333;transform:scaleX(1.0105);">Quick Format</div>
<div class="t" style="left:925.51px;top:141.93px;font-family:'Liberation Sans', sans-serif;font-size:31.977px;line-height:31.977px;color:#9a9a9a;transform:scaleX(0.9461);">%</div>
<div class="t" style="left:967.41px;top:144.53px;font-family:'Liberation Sans', sans-serif;font-size:28.307px;line-height:28.307px;color:#9a9a9a;">$€</div>
<div class="t" style="left:1007.44px;top:147.10px;font-family:'Liberation Sans', sans-serif;font-size:27.754px;line-height:27.754px;color:#333;-webkit-text-stroke:0.30px #333;transform:scaleX(0.9872);">.0</div>
<div class="t" style="left:1050.05px;top:147.10px;font-family:'Liberation Sans', sans-serif;font-size:27.754px;line-height:27.754px;color:#333;-webkit-text-stroke:0.30px #333;transform:scaleX(0.9823);">.0</div>
<div class="t" style="left:972.68px;top:190.95px;font-family:'Liberation Sans', sans-serif;font-size:19.193px;line-height:19.193px;color:#444;transform:scaleX(1.0267);">Number</div>
<div class="t" style="left:1260.04px;top:143.96px;font-family:'Liberation Sans', sans-serif;font-size:21.541px;line-height:21.541px;color:#333;-webkit-text-stroke:0.55px #333;transform:scaleX(0.9703);">1.2</div>
<div class="t" style="left:1189.78px;top:191.25px;font-family:'Liberation Sans', sans-serif;font-size:19.193px;line-height:19.193px;color:#444;transform:scaleX(1.0360);">Chart</div>
<div class="t" style="left:1343.72px;top:121.85px;font-family:'Liberation Sans', sans-serif;font-size:20.850px;line-height:20.850px;color:#333;transform:scaleX(1.0535);">Conditional</div>
<div class="t" style="left:1336.17px;top:155.05px;font-family:'Liberation Sans', sans-serif;font-size:20.850px;line-height:20.850px;color:#333;transform:scaleX(1.0660);">Formatting</div>
<div class="t" style="left:1470.81px;top:121.85px;font-family:'Liberation Sans', sans-serif;font-size:20.850px;line-height:20.850px;color:#333;transform:scaleX(0.9711);">Totals</div>
<div class="t" style="left:1537.01px;top:121.85px;font-family:'Liberation Sans', sans-serif;font-size:20.850px;line-height:20.850px;color:#333;transform:scaleX(0.9719);">Top n</div>
<div class="t" style="left:1602.53px;top:121.85px;font-family:'Liberation Sans', sans-serif;font-size:20.850px;line-height:20.850px;color:#333;transform:scaleX(1.0326);">Explorer</div>
<div class="t" style="left:1697.02px;top:121.85px;font-family:'Liberation Sans', sans-serif;font-size:20.850px;line-height:20.850px;color:#333;transform:scaleX(1.0201);">Sort</div>
<div class="t" style="left:1544.53px;top:191.25px;font-family:'Liberation Sans', sans-serif;font-size:19.193px;line-height:19.193px;color:#444;transform:scaleX(0.9848);">Analyze</div>
<div class="t" style="left:1857.20px;top:121.46px;font-family:'Liberation Sans', sans-serif;font-size:20.712px;line-height:20.712px;color:#333;transform:scaleX(1.0503);">Notes</div>
<div class="t" style="left:1845.04px;top:191.35px;font-family:'Liberation Sans', sans-serif;font-size:19.193px;line-height:19.193px;color:#444;transform:scaleX(1.0312);">Annotate</div>
<div class="t" style="left:1998.01px;top:90.83px;font-family:'Liberation Sans', sans-serif;font-size:20.988px;line-height:20.988px;color:#333;transform:scaleX(0.9730);">Templates</div>
<div class="t" style="left:1996.29px;top:140.75px;font-family:'Liberation Sans', sans-serif;font-size:20.850px;line-height:20.850px;color:#333;">Display</div>
<div class="t" style="left:2077.64px;top:195.45px;font-family:'Liberation Sans', sans-serif;font-size:19.193px;line-height:19.193px;color:#444;">Actions</div>
<!-- table -->
<div class="r" style="left:354.50px;top:312.00px;width:1158.00px;height:1.00px;background:#e3e3e3;"></div>
<div class="r" style="left:28.60px;top:358.20px;width:1483.90px;height:1.10px;background:#dedede;"></div>
<div class="r" style="left:28.60px;top:358.20px;width:1.10px;height:875.30px;background:#e3e3e3;"></div>
<div class="r" style="left:29.70px;top:449.50px;width:1482.80px;height:51.00px;background:#f4f4f4;"></div>
<div class="r" style="left:29.70px;top:536.00px;width:1482.80px;height:33.00px;background:#f4f4f4;"></div>
<div class="r" style="left:29.70px;top:599.60px;width:1482.80px;height:1.20px;background:#e6e6e6;"></div>
<div class="r" style="left:29.70px;top:600.20px;width:1482.80px;height:33.80px;background:#f4f4f4;"></div>
<div class="r" style="left:29.70px;top:633.40px;width:1482.80px;height:1.20px;background:#e6e6e6;"></div>
<div class="r" style="left:29.70px;top:665.80px;width:1482.80px;height:1.20px;background:#e6e6e6;"></div>
<div class="r" style="left:29.70px;top:666.40px;width:1482.80px;height:35.50px;background:#f4f4f4;"></div>
<div class="r" style="left:29.70px;top:732.70px;width:1482.80px;height:1.20px;background:#e6e6e6;"></div>
<div class="r" style="left:29.70px;top:733.30px;width:1482.80px;height:32.50px;background:#f4f4f4;"></div>
<div class="r" style="left:29.70px;top:765.20px;width:1482.80px;height:1.20px;background:#e6e6e6;"></div>
<div class="r" style="left:29.70px;top:801.30px;width:1482.80px;height:34.40px;background:#f4f4f4;"></div>
<div class="r" style="left:29.70px;top:866.50px;width:1482.80px;height:1.20px;background:#e6e6e6;"></div>
<div class="r" style="left:29.70px;top:867.10px;width:1482.80px;height:32.40px;background:#f4f4f4;"></div>
<div class="r" style="left:29.70px;top:898.90px;width:1482.80px;height:1.20px;background:#e6e6e6;"></div>
<div class="r" style="left:29.70px;top:932.50px;width:1482.80px;height:1.20px;background:#e6e6e6;"></div>
<div class="r" style="left:29.70px;top:933.10px;width:1482.80px;height:34.00px;background:#f4f4f4;"></div>
<div class="r" style="left:29.70px;top:998.50px;width:1482.80px;height:1.20px;background:#e6e6e6;"></div>
<div class="r" style="left:29.70px;top:999.10px;width:1482.80px;height:33.50px;background:#f4f4f4;"></div>
<div class="r" style="left:29.70px;top:1032.00px;width:1482.80px;height:1.20px;background:#e6e6e6;"></div>
<div class="r" style="left:29.70px;top:1067.10px;width:1482.80px;height:33.50px;background:#f4f4f4;"></div>
<div class="r" style="left:29.70px;top:1132.00px;width:1482.80px;height:1.20px;background:#e6e6e6;"></div>
<div class="r" style="left:29.70px;top:1132.60px;width:1482.80px;height:34.00px;background:#f4f4f4;"></div>
<div class="r" style="left:29.70px;top:1166.00px;width:1482.80px;height:1.20px;background:#e6e6e6;"></div>
<div class="r" style="left:29.70px;top:1198.30px;width:1482.80px;height:1.20px;background:#e6e6e6;"></div>
<div class="r" style="left:29.70px;top:1198.90px;width:1482.80px;height:34.40px;background:#f4f4f4;"></div>
<div class="r" style="left:353.90px;top:312.00px;width:1.20px;height:921.50px;background:#a8a8a8;"></div>
<div class="r" style="left:498.70px;top:358.50px;width:1.10px;height:875.00px;background:#e3e3e3;"></div>
<div class="r" style="left:643.40px;top:358.50px;width:1.10px;height:875.00px;background:#e3e3e3;"></div>
<div class="r" style="left:788.10px;top:358.50px;width:1.10px;height:875.00px;background:#e3e3e3;"></div>
<div class="r" style="left:932.80px;top:358.50px;width:1.10px;height:875.00px;background:#e3e3e3;"></div>
<div class="r" style="left:1077.50px;top:358.50px;width:1.10px;height:875.00px;background:#e3e3e3;"></div>
<div class="r" style="left:1222.20px;top:358.50px;width:1.10px;height:875.00px;background:#e3e3e3;"></div>
<div class="r" style="left:1366.90px;top:358.50px;width:1.10px;height:875.00px;background:#e3e3e3;"></div>
<div class="r" style="left:1511.60px;top:312.00px;width:1.20px;height:921.50px;background:#e3e3e3;"></div>
<div class="r" style="left:28.60px;top:448.80px;width:1483.90px;height:1.40px;background:#b4b4b4;"></div>
<div class="r" style="left:28.60px;top:1232.60px;width:1484.40px;height:1.60px;background:#bdbdbd;"></div>
<svg class="ov" width="2304" height="1294" viewBox="0 0 2304 1294">
<rect x="41.90" y="467.40" width="13.6" height="13.6" fill="none" stroke="#555" stroke-width="1.2"/>
<line x1="44.90" y1="474.20" x2="52.50" y2="474.20" stroke="#555" stroke-width="1.20" stroke-linecap="butt"/>
<rect x="41.90" y="510.80" width="13.6" height="13.6" fill="none" stroke="#555" stroke-width="1.2"/>
<line x1="44.90" y1="517.60" x2="52.50" y2="517.60" stroke="#555" stroke-width="1.20" stroke-linecap="butt"/>
<rect x="60.10" y="545.00" width="13.6" height="13.6" fill="none" stroke="#555" stroke-width="1.2"/>
<line x1="63.10" y1="551.80" x2="70.70" y2="551.80" stroke="#555" stroke-width="1.20" stroke-linecap="butt"/>
<rect x="60.10" y="676.70" width="13.6" height="13.6" fill="none" stroke="#555" stroke-width="1.2"/>
<line x1="63.10" y1="683.50" x2="70.70" y2="683.50" stroke="#555" stroke-width="1.20" stroke-linecap="butt"/>
<rect x="41.90" y="776.20" width="13.6" height="13.6" fill="none" stroke="#555" stroke-width="1.2"/>
<line x1="44.90" y1="783.00" x2="52.50" y2="783.00" stroke="#555" stroke-width="1.20" stroke-linecap="butt"/>
<rect x="60.10" y="810.00" width="13.6" height="13.6" fill="none" stroke="#555" stroke-width="1.2"/>
<line x1="63.10" y1="816.80" x2="70.70" y2="816.80" stroke="#555" stroke-width="1.20" stroke-linecap="butt"/>
<rect x="60.10" y="943.50" width="13.6" height="13.6" fill="none" stroke="#555" stroke-width="1.2"/>
<line x1="63.10" y1="950.30" x2="70.70" y2="950.30" stroke="#555" stroke-width="1.20" stroke-linecap="butt"/>
<rect x="41.90" y="1042.00" width="13.6" height="13.6" fill="none" stroke="#555" stroke-width="1.2"/>
<line x1="44.90" y1="1048.80" x2="52.50" y2="1048.80" stroke="#555" stroke-width="1.20" stroke-linecap="butt"/>
<rect x="60.10" y="1077.50" width="13.6" height="13.6" fill="none" stroke="#555" stroke-width="1.2"/>
<line x1="63.10" y1="1084.30" x2="70.70" y2="1084.30" stroke="#555" stroke-width="1.20" stroke-linecap="butt"/>
<rect x="60.10" y="1208.50" width="13.6" height="13.6" fill="none" stroke="#555" stroke-width="1.2"/>
<line x1="63.10" y1="1215.30" x2="70.70" y2="1215.30" stroke="#555" stroke-width="1.20" stroke-linecap="butt"/>
</svg>
<div class="t" style="left:42.44px;top:255.65px;font-family:'Liberation Sans', sans-serif;font-size:20.850px;line-height:20.850px;color:#333;transform:scaleX(0.9937);">Sum of Actuals, Sum of Plan by Sub Region, Category, Sub Category, Quarter</div>
<div class="t" style="left:33.58px;top:326.00px;font-family:'Liberation Sans', sans-serif;font-size:20.436px;line-height:20.436px;color:#2f2f2f;font-weight:700;transform:scaleX(0.9893);">Quarter</div>
<div class="t" style="left:366.05px;top:326.90px;font-family:'Liberation Sans', sans-serif;font-size:20.436px;line-height:20.436px;color:#2f2f2f;font-weight:700;transform:scaleX(1.0332);">Qtr 1</div>
<div class="t" style="left:61.86px;top:395.51px;font-family:'Liberation Sans', sans-serif;font-size:20.298px;line-height:20.298px;color:#2f2f2f;transform:scaleX(0.9941);">Sub Region</div>
<div class="t" style="left:427.45px;top:370.30px;font-family:'Liberation Sans', sans-serif;font-size:20.436px;line-height:20.436px;color:#2f2f2f;transform:scaleX(1.0076);">Sum of</div>
<div class="t" style="left:425.34px;top:396.30px;font-family:'Liberation Sans', sans-serif;font-size:20.436px;line-height:20.436px;color:#2f2f2f;transform:scaleX(1.0207);">Actuals</div>
<div class="t" style="left:412.37px;top:423.74px;font-family:'Liberation Sans', sans-serif;font-size:16.846px;line-height:16.846px;color:#2f2f2f;transform:scaleX(1.0986);">in Millions</div>
<div class="t" style="left:526.19px;top:383.00px;font-family:'Liberation Sans', sans-serif;font-size:20.436px;line-height:20.436px;color:#2f2f2f;transform:scaleX(0.8600);">Sum of Plan</div>
<div class="t" style="left:67.76px;top:466.80px;font-family:'Liberation Sans', sans-serif;font-size:19.608px;line-height:19.608px;color:#2f2f2f;font-weight:700;transform:scaleX(1.1132);">All</div>
<div class="t" style="left:419.87px;top:466.36px;font-family:'Liberation Mono', monospace;font-size:22.500px;line-height:22.500px;color:#2f2f2f;font-weight:700;transform:scaleX(0.8600);">727.42</div>
<div class="t" style="left:564.55px;top:466.36px;font-family:'Liberation Mono', monospace;font-size:22.500px;line-height:22.500px;color:#2f2f2f;font-weight:700;transform:scaleX(0.8600);">658.20</div>
<div class="t" style="left:709.14px;top:466.36px;font-family:'Liberation Mono', monospace;font-size:22.500px;line-height:22.500px;color:#2f2f2f;font-weight:700;transform:scaleX(0.8600);">788.41</div>
<div class="t" style="left:853.97px;top:466.36px;font-family:'Liberation Mono', monospace;font-size:22.500px;line-height:22.500px;color:#2f2f2f;font-weight:700;transform:scaleX(0.8600);">760.92</div>
<div class="t" style="left:998.34px;top:466.36px;font-family:'Liberation Mono', monospace;font-size:22.500px;line-height:22.500px;color:#2f2f2f;font-weight:700;transform:scaleX(0.8600);">812.44</div>
<div class="t" style="left:1143.24px;top:466.36px;font-family:'Liberation Mono', monospace;font-size:22.500px;line-height:22.500px;color:#2f2f2f;font-weight:700;transform:scaleX(0.8600);">873.01</div>
<div class="t" style="left:1288.04px;top:466.36px;font-family:'Liberation Mono', monospace;font-size:22.500px;line-height:22.500px;color:#2f2f2f;font-weight:700;transform:scaleX(0.8600);">690.15</div>
<div class="t" style="left:1432.75px;top:466.36px;font-family:'Liberation Mono', monospace;font-size:22.500px;line-height:22.500px;color:#2f2f2f;font-weight:700;transform:scaleX(0.8600);">752.30</div>
<div class="t" style="left:67.88px;top:510.20px;font-family:'Liberation Sans', sans-serif;font-size:19.608px;line-height:19.608px;color:#2f2f2f;font-weight:700;transform:scaleX(0.9381);">APAC</div>
<div class="t" style="left:430.99px;top:509.76px;font-family:'Liberation Mono', monospace;font-size:22.500px;line-height:22.500px;color:#2f2f2f;font-weight:700;transform:scaleX(0.8600);">88.84</div>
<div class="t" style="left:575.76px;top:509.76px;font-family:'Liberation Mono', monospace;font-size:22.500px;line-height:22.500px;color:#2f2f2f;font-weight:700;transform:scaleX(0.8600);">80.11</div>
<div class="t" style="left:721.06px;top:509.76px;font-family:'Liberation Mono', monospace;font-size:22.500px;line-height:22.500px;color:#2f2f2f;font-weight:700;transform:scaleX(0.8600);">95.32</div>
<div class="t" style="left:865.76px;top:509.76px;font-family:'Liberation Mono', monospace;font-size:22.500px;line-height:22.500px;color:#2f2f2f;font-weight:700;transform:scaleX(0.8600);">90.42</div>
<div class="t" style="left:1010.43px;top:509.76px;font-family:'Liberation Mono', monospace;font-size:22.500px;line-height:22.500px;color:#2f2f2f;font-weight:700;transform:scaleX(0.8600);">99.18</div>
<div class="t" style="left:1143.39px;top:509.76px;font-family:'Liberation Mono', monospace;font-size:22.500px;line-height:22.500px;color:#2f2f2f;font-weight:700;transform:scaleX(0.8600);">104.27</div>
<div class="t" style="left:1299.92px;top:509.76px;font-family:'Liberation Mono', monospace;font-size:22.500px;line-height:22.500px;color:#2f2f2f;font-weight:700;transform:scaleX(0.8600);">85.09</div>
<div class="t" style="left:1444.55px;top:509.76px;font-family:'Liberation Mono', monospace;font-size:22.500px;line-height:22.500px;color:#2f2f2f;font-weight:700;transform:scaleX(0.8600);">92.66</div>
<div class="t" style="left:85.71px;top:544.40px;font-family:'Liberation Sans', sans-serif;font-size:19.608px;line-height:19.608px;color:#2f2f2f;-webkit-text-stroke:0.55px #2f2f2f;transform:scaleX(1.0090);">Beverages</div>
<div class="t" style="left:431.59px;top:543.96px;font-family:'Liberation Mono', monospace;font-size:22.500px;line-height:22.500px;color:#2f2f2f;-webkit-text-stroke:0.35px #2f2f2f;transform:scaleX(0.8600);">63.50</div>
<div class="t" style="left:575.76px;top:543.96px;font-family:'Liberation Mono', monospace;font-size:22.500px;line-height:22.500px;color:#2f2f2f;-webkit-text-stroke:0.35px #2f2f2f;transform:scaleX(0.8600);">57.41</div>
<div class="t" style="left:721.11px;top:543.96px;font-family:'Liberation Mono', monospace;font-size:22.500px;line-height:22.500px;color:#2f2f2f;-webkit-text-stroke:0.35px #2f2f2f;transform:scaleX(0.8600);">68.92</div>
<div class="t" style="left:865.16px;top:543.96px;font-family:'Liberation Mono', monospace;font-size:22.500px;line-height:22.500px;color:#2f2f2f;-webkit-text-stroke:0.35px #2f2f2f;transform:scaleX(0.8600);">64.71</div>
<div class="t" style="left:1010.42px;top:543.96px;font-family:'Liberation Mono', monospace;font-size:22.500px;line-height:22.500px;color:#2f2f2f;-webkit-text-stroke:0.35px #2f2f2f;transform:scaleX(0.8600);">70.03</div>
<div class="t" style="left:1155.14px;top:543.96px;font-family:'Liberation Mono', monospace;font-size:22.500px;line-height:22.500px;color:#2f2f2f;-webkit-text-stroke:0.35px #2f2f2f;transform:scaleX(0.8600);">75.55</div>
<div class="t" style="left:1300.01px;top:543.96px;font-family:'Liberation Mono', monospace;font-size:22.500px;line-height:22.500px;color:#2f2f2f;-webkit-text-stroke:0.35px #2f2f2f;transform:scaleX(0.8600);">60.87</div>
<div class="t" style="left:1444.58px;top:543.96px;font-family:'Liberation Mono', monospace;font-size:22.500px;line-height:22.500px;color:#2f2f2f;-webkit-text-stroke:0.35px #2f2f2f;transform:scaleX(0.8600);">66.18</div>
<div class="t" style="left:95.21px;top:576.46px;font-family:'Liberation Sans', sans-serif;font-size:19.884px;line-height:19.884px;color:#2f2f2f;transform:scaleX(0.9581);">Juices</div>
<div class="t" style="left:431.78px;top:576.26px;font-family:'Liberation Mono', monospace;font-size:22.500px;line-height:22.500px;color:#2f2f2f;transform:scaleX(0.8600);">31.05</div>
<div class="t" style="left:576.25px;top:576.26px;font-family:'Liberation Mono', monospace;font-size:22.500px;line-height:22.500px;color:#2f2f2f;transform:scaleX(0.8600);">28.44</div>
<div class="t" style="left:721.13px;top:576.26px;font-family:'Liberation Mono', monospace;font-size:22.500px;line-height:22.500px;color:#2f2f2f;transform:scaleX(0.8600);">34.20</div>
<div class="t" style="left:865.17px;top:576.26px;font-family:'Liberation Mono', monospace;font-size:22.500px;line-height:22.500px;color:#2f2f2f;transform:scaleX(0.8600);">32.11</div>
<div class="t" style="left:1010.64px;top:576.26px;font-family:'Liberation Mono', monospace;font-size:22.500px;line-height:22.500px;color:#2f2f2f;transform:scaleX(0.8600);">35.62</div>
<div class="t" style="left:1154.57px;top:576.26px;font-family:'Liberation Mono', monospace;font-size:22.500px;line-height:22.500px;color:#2f2f2f;transform:scaleX(0.8600);">37.81</div>
<div class="t" style="left:1299.98px;top:576.26px;font-family:'Liberation Mono', monospace;font-size:22.500px;line-height:22.500px;color:#2f2f2f;transform:scaleX(0.8600);">30.16</div>
<div class="t" style="left:1444.78px;top:576.26px;font-family:'Liberation Mono', monospace;font-size:22.500px;line-height:22.500px;color:#2f2f2f;transform:scaleX(0.8600);">33.07</div>
<div class="t" style="left:94.26px;top:608.16px;font-family:'Liberation Sans', sans-serif;font-size:19.884px;line-height:19.884px;color:#2f2f2f;transform:scaleX(0.9953);">Soda</div>
<div class="t" style="left:431.78px;top:607.96px;font-family:'Liberation Mono', monospace;font-size:22.500px;line-height:22.500px;color:#2f2f2f;transform:scaleX(0.8600);">24.76</div>
<div class="t" style="left:576.46px;top:607.96px;font-family:'Liberation Mono', monospace;font-size:22.500px;line-height:22.500px;color:#2f2f2f;transform:scaleX(0.8600);">22.03</div>
<div class="t" style="left:721.18px;top:607.96px;font-family:'Liberation Mono', monospace;font-size:22.500px;line-height:22.500px;color:#2f2f2f;transform:scaleX(0.8600);">26.55</div>
<div class="t" style="left:865.91px;top:607.96px;font-family:'Liberation Mono', monospace;font-size:22.500px;line-height:22.500px;color:#2f2f2f;transform:scaleX(0.8600);">25.18</div>
<div class="t" style="left:1010.35px;top:607.96px;font-family:'Liberation Mono', monospace;font-size:22.500px;line-height:22.500px;color:#2f2f2f;transform:scaleX(0.8600);">26.94</div>
<div class="t" style="left:1155.34px;top:607.96px;font-family:'Liberation Mono', monospace;font-size:22.500px;line-height:22.500px;color:#2f2f2f;transform:scaleX(0.8600);">29.12</div>
<div class="t" style="left:1300.01px;top:607.96px;font-family:'Liberation Mono', monospace;font-size:22.500px;line-height:22.500px;color:#2f2f2f;transform:scaleX(0.8600);">23.48</div>
<div class="t" style="left:1443.97px;top:607.96px;font-family:'Liberation Mono', monospace;font-size:22.500px;line-height:22.500px;color:#2f2f2f;transform:scaleX(0.8600);">25.61</div>
<div class="t" style="left:95.21px;top:641.36px;font-family:'Liberation Sans', sans-serif;font-size:19.884px;line-height:19.884px;color:#2f2f2f;transform:scaleX(1.0304);">Tea &amp; Coffee</div>
<div class="t" style="left:443.11px;top:641.16px;font-family:'Liberation Mono', monospace;font-size:22.500px;line-height:22.500px;color:#2f2f2f;transform:scaleX(0.8600);">7.69</div>
<div class="t" style="left:587.72px;top:641.16px;font-family:'Liberation Mono', monospace;font-size:22.500px;line-height:22.500px;color:#2f2f2f;transform:scaleX(0.8600);">6.94</div>
<div class="t" style="left:733.07px;top:641.16px;font-family:'Liberation Mono', monospace;font-size:22.500px;line-height:22.500px;color:#2f2f2f;transform:scaleX(0.8600);">8.17</div>
<div class="t" style="left:877.21px;top:641.16px;font-family:'Liberation Mono', monospace;font-size:22.500px;line-height:22.500px;color:#2f2f2f;transform:scaleX(0.8600);">7.42</div>
<div class="t" style="left:1022.47px;top:641.16px;font-family:'Liberation Mono', monospace;font-size:22.500px;line-height:22.500px;color:#2f2f2f;transform:scaleX(0.8600);">7.47</div>
<div class="t" style="left:1166.61px;top:641.16px;font-family:'Liberation Mono', monospace;font-size:22.500px;line-height:22.500px;color:#2f2f2f;transform:scaleX(0.8600);">8.62</div>
<div class="t" style="left:1311.30px;top:641.16px;font-family:'Liberation Mono', monospace;font-size:22.500px;line-height:22.500px;color:#2f2f2f;transform:scaleX(0.8600);">7.23</div>
<div class="t" style="left:1456.00px;top:641.16px;font-family:'Liberation Mono', monospace;font-size:22.500px;line-height:22.500px;color:#2f2f2f;transform:scaleX(0.8600);">7.50</div>
<div class="t" style="left:86.88px;top:676.10px;font-family:'Liberation Sans', sans-serif;font-size:19.608px;line-height:19.608px;color:#2f2f2f;-webkit-text-stroke:0.55px #2f2f2f;transform:scaleX(1.0350);">Water</div>
<div class="t" style="left:431.07px;top:675.66px;font-family:'Liberation Mono', monospace;font-size:22.500px;line-height:22.500px;color:#2f2f2f;-webkit-text-stroke:0.35px #2f2f2f;transform:scaleX(0.8600);">25.34</div>
<div class="t" style="left:576.29px;top:675.66px;font-family:'Liberation Mono', monospace;font-size:22.500px;line-height:22.500px;color:#2f2f2f;-webkit-text-stroke:0.35px #2f2f2f;transform:scaleX(0.8600);">22.70</div>
<div class="t" style="left:720.99px;top:675.66px;font-family:'Liberation Mono', monospace;font-size:22.500px;line-height:22.500px;color:#2f2f2f;-webkit-text-stroke:0.35px #2f2f2f;transform:scaleX(0.8600);">26.40</div>
<div class="t" style="left:865.16px;top:675.66px;font-family:'Liberation Mono', monospace;font-size:22.500px;line-height:22.500px;color:#2f2f2f;-webkit-text-stroke:0.35px #2f2f2f;transform:scaleX(0.8600);">25.71</div>
<div class="t" style="left:1010.44px;top:675.66px;font-family:'Liberation Mono', monospace;font-size:22.500px;line-height:22.500px;color:#2f2f2f;-webkit-text-stroke:0.35px #2f2f2f;transform:scaleX(0.8600);">29.15</div>
<div class="t" style="left:1155.21px;top:675.66px;font-family:'Liberation Mono', monospace;font-size:22.500px;line-height:22.500px;color:#2f2f2f;-webkit-text-stroke:0.35px #2f2f2f;transform:scaleX(0.8600);">28.72</div>
<div class="t" style="left:1299.91px;top:675.66px;font-family:'Liberation Mono', monospace;font-size:22.500px;line-height:22.500px;color:#2f2f2f;-webkit-text-stroke:0.35px #2f2f2f;transform:scaleX(0.8600);">24.22</div>
<div class="t" style="left:1444.58px;top:675.66px;font-family:'Liberation Mono', monospace;font-size:22.500px;line-height:22.500px;color:#2f2f2f;-webkit-text-stroke:0.35px #2f2f2f;transform:scaleX(0.8600);">26.48</div>
<div class="t" style="left:94.13px;top:707.96px;font-family:'Liberation Sans', sans-serif;font-size:19.884px;line-height:19.884px;color:#2f2f2f;transform:scaleX(1.0704);">Mineral Water</div>
<div class="t" style="left:431.07px;top:707.76px;font-family:'Liberation Mono', monospace;font-size:22.500px;line-height:22.500px;color:#2f2f2f;transform:scaleX(0.8600);">21.31</div>
<div class="t" style="left:576.48px;top:707.76px;font-family:'Liberation Mono', monospace;font-size:22.500px;line-height:22.500px;color:#2f2f2f;transform:scaleX(0.8600);">19.05</div>
<div class="t" style="left:721.18px;top:707.76px;font-family:'Liberation Mono', monospace;font-size:22.500px;line-height:22.500px;color:#2f2f2f;transform:scaleX(0.8600);">22.16</div>
<div class="t" style="left:865.86px;top:707.76px;font-family:'Liberation Mono', monospace;font-size:22.500px;line-height:22.500px;color:#2f2f2f;transform:scaleX(0.8600);">21.83</div>
<div class="t" style="left:1010.53px;top:707.76px;font-family:'Liberation Mono', monospace;font-size:22.500px;line-height:22.500px;color:#2f2f2f;transform:scaleX(0.8600);">24.90</div>
<div class="t" style="left:1155.31px;top:707.76px;font-family:'Liberation Mono', monospace;font-size:22.500px;line-height:22.500px;color:#2f2f2f;transform:scaleX(0.8600);">24.38</div>
<div class="t" style="left:1299.96px;top:707.76px;font-family:'Liberation Mono', monospace;font-size:22.500px;line-height:22.500px;color:#2f2f2f;transform:scaleX(0.8600);">20.33</div>
<div class="t" style="left:1444.72px;top:707.76px;font-family:'Liberation Mono', monospace;font-size:22.500px;line-height:22.500px;color:#2f2f2f;transform:scaleX(0.8600);">22.09</div>
<div class="t" style="left:94.21px;top:741.06px;font-family:'Liberation Sans', sans-serif;font-size:19.884px;line-height:19.884px;color:#2f2f2f;transform:scaleX(1.0503);">Sparkling Water</div>
<div class="t" style="left:443.10px;top:740.86px;font-family:'Liberation Mono', monospace;font-size:22.500px;line-height:22.500px;color:#2f2f2f;transform:scaleX(0.8600);">4.03</div>
<div class="t" style="left:587.80px;top:740.86px;font-family:'Liberation Mono', monospace;font-size:22.500px;line-height:22.500px;color:#2f2f2f;transform:scaleX(0.8600);">3.65</div>
<div class="t" style="left:732.42px;top:740.86px;font-family:'Liberation Mono', monospace;font-size:22.500px;line-height:22.500px;color:#2f2f2f;transform:scaleX(0.8600);">4.24</div>
<div class="t" style="left:877.21px;top:740.86px;font-family:'Liberation Mono', monospace;font-size:22.500px;line-height:22.500px;color:#2f2f2f;transform:scaleX(0.8600);">3.88</div>
<div class="t" style="left:1021.90px;top:740.86px;font-family:'Liberation Mono', monospace;font-size:22.500px;line-height:22.500px;color:#2f2f2f;transform:scaleX(0.8600);">4.25</div>
<div class="t" style="left:1166.52px;top:740.86px;font-family:'Liberation Mono', monospace;font-size:22.500px;line-height:22.500px;color:#2f2f2f;transform:scaleX(0.8600);">4.34</div>
<div class="t" style="left:1311.31px;top:740.86px;font-family:'Liberation Mono', monospace;font-size:22.500px;line-height:22.500px;color:#2f2f2f;transform:scaleX(0.8600);">3.89</div>
<div class="t" style="left:1456.01px;top:740.86px;font-family:'Liberation Mono', monospace;font-size:22.500px;line-height:22.500px;color:#2f2f2f;transform:scaleX(0.8600);">4.39</div>
<div class="t" style="left:67.68px;top:775.60px;font-family:'Liberation Sans', sans-serif;font-size:19.608px;line-height:19.608px;color:#2f2f2f;font-weight:700;transform:scaleX(1.0317);">Central</div>
<div class="t" style="left:431.59px;top:775.16px;font-family:'Liberation Mono', monospace;font-size:22.500px;line-height:22.500px;color:#2f2f2f;font-weight:700;transform:scaleX(0.8600);">81.25</div>
<div class="t" style="left:576.33px;top:775.16px;font-family:'Liberation Mono', monospace;font-size:22.500px;line-height:22.500px;color:#2f2f2f;font-weight:700;transform:scaleX(0.8600);">73.08</div>
<div class="t" style="left:721.06px;top:775.16px;font-family:'Liberation Mono', monospace;font-size:22.500px;line-height:22.500px;color:#2f2f2f;font-weight:700;transform:scaleX(0.8600);">86.40</div>
<div class="t" style="left:865.91px;top:775.16px;font-family:'Liberation Mono', monospace;font-size:22.500px;line-height:22.500px;color:#2f2f2f;font-weight:700;transform:scaleX(0.8600);">84.57</div>
<div class="t" style="left:1010.46px;top:775.16px;font-family:'Liberation Mono', monospace;font-size:22.500px;line-height:22.500px;color:#2f2f2f;font-weight:700;transform:scaleX(0.8600);">90.12</div>
<div class="t" style="left:1155.16px;top:775.16px;font-family:'Liberation Mono', monospace;font-size:22.500px;line-height:22.500px;color:#2f2f2f;font-weight:700;transform:scaleX(0.8600);">95.70</div>
<div class="t" style="left:1299.26px;top:775.16px;font-family:'Liberation Mono', monospace;font-size:22.500px;line-height:22.500px;color:#2f2f2f;font-weight:700;transform:scaleX(0.8600);">77.41</div>
<div class="t" style="left:1444.49px;top:775.16px;font-family:'Liberation Mono', monospace;font-size:22.500px;line-height:22.500px;color:#2f2f2f;font-weight:700;transform:scaleX(0.8600);">83.95</div>
<div class="t" style="left:85.71px;top:809.40px;font-family:'Liberation Sans', sans-serif;font-size:19.608px;line-height:19.608px;color:#2f2f2f;-webkit-text-stroke:0.55px #2f2f2f;transform:scaleX(1.0090);">Beverages</div>
<div class="t" style="left:431.64px;top:808.96px;font-family:'Liberation Mono', monospace;font-size:22.500px;line-height:22.500px;color:#2f2f2f;-webkit-text-stroke:0.35px #2f2f2f;transform:scaleX(0.8600);">60.25</div>
<div class="t" style="left:576.51px;top:808.96px;font-family:'Liberation Mono', monospace;font-size:22.500px;line-height:22.500px;color:#2f2f2f;-webkit-text-stroke:0.35px #2f2f2f;transform:scaleX(0.8600);">53.97</div>
<div class="t" style="left:721.21px;top:808.96px;font-family:'Liberation Mono', monospace;font-size:22.500px;line-height:22.500px;color:#2f2f2f;-webkit-text-stroke:0.35px #2f2f2f;transform:scaleX(0.8600);">63.27</div>
<div class="t" style="left:865.16px;top:808.96px;font-family:'Liberation Mono', monospace;font-size:22.500px;line-height:22.500px;color:#2f2f2f;-webkit-text-stroke:0.35px #2f2f2f;transform:scaleX(0.8600);">63.01</div>
<div class="t" style="left:1010.46px;top:808.96px;font-family:'Liberation Mono', monospace;font-size:22.500px;line-height:22.500px;color:#2f2f2f;-webkit-text-stroke:0.35px #2f2f2f;transform:scaleX(0.8600);">66.46</div>
<div class="t" style="left:1154.57px;top:808.96px;font-family:'Liberation Mono', monospace;font-size:22.500px;line-height:22.500px;color:#2f2f2f;-webkit-text-stroke:0.35px #2f2f2f;transform:scaleX(0.8600);">71.04</div>
<div class="t" style="left:1299.84px;top:808.96px;font-family:'Liberation Mono', monospace;font-size:22.500px;line-height:22.500px;color:#2f2f2f;-webkit-text-stroke:0.35px #2f2f2f;transform:scaleX(0.8600);">57.15</div>
<div class="t" style="left:1444.54px;top:808.96px;font-family:'Liberation Mono', monospace;font-size:22.500px;line-height:22.500px;color:#2f2f2f;-webkit-text-stroke:0.35px #2f2f2f;transform:scaleX(0.8600);">62.15</div>
<div class="t" style="left:95.21px;top:841.46px;font-family:'Liberation Sans', sans-serif;font-size:19.884px;line-height:19.884px;color:#2f2f2f;transform:scaleX(0.9581);">Juices</div>
<div class="t" style="left:431.73px;top:841.26px;font-family:'Liberation Mono', monospace;font-size:22.500px;line-height:22.500px;color:#2f2f2f;transform:scaleX(0.8600);">33.10</div>
<div class="t" style="left:576.54px;top:841.26px;font-family:'Liberation Mono', monospace;font-size:22.500px;line-height:22.500px;color:#2f2f2f;transform:scaleX(0.8600);">29.32</div>
<div class="t" style="left:720.47px;top:841.26px;font-family:'Liberation Mono', monospace;font-size:22.500px;line-height:22.500px;color:#2f2f2f;transform:scaleX(0.8600);">34.41</div>
<div class="t" style="left:865.88px;top:841.26px;font-family:'Liberation Mono', monospace;font-size:22.500px;line-height:22.500px;color:#2f2f2f;transform:scaleX(0.8600);">33.85</div>
<div class="t" style="left:1010.53px;top:841.26px;font-family:'Liberation Mono', monospace;font-size:22.500px;line-height:22.500px;color:#2f2f2f;transform:scaleX(0.8600);">36.20</div>
<div class="t" style="left:1154.57px;top:841.26px;font-family:'Liberation Mono', monospace;font-size:22.500px;line-height:22.500px;color:#2f2f2f;transform:scaleX(0.8600);">38.11</div>
<div class="t" style="left:1300.08px;top:841.26px;font-family:'Liberation Mono', monospace;font-size:22.500px;line-height:22.500px;color:#2f2f2f;transform:scaleX(0.8600);">31.07</div>
<div class="t" style="left:1444.74px;top:841.26px;font-family:'Liberation Mono', monospace;font-size:22.500px;line-height:22.500px;color:#2f2f2f;transform:scaleX(0.8600);">33.92</div>
<div class="t" style="left:94.26px;top:873.76px;font-family:'Liberation Sans', sans-serif;font-size:19.884px;line-height:19.884px;color:#2f2f2f;transform:scaleX(0.9953);">Soda</div>
<div class="t" style="left:431.73px;top:873.56px;font-family:'Liberation Mono', monospace;font-size:22.500px;line-height:22.500px;color:#2f2f2f;transform:scaleX(0.8600);">20.30</div>
<div class="t" style="left:575.77px;top:873.56px;font-family:'Liberation Mono', monospace;font-size:22.500px;line-height:22.500px;color:#2f2f2f;transform:scaleX(0.8600);">18.31</div>
<div class="t" style="left:721.18px;top:873.56px;font-family:'Liberation Mono', monospace;font-size:22.500px;line-height:22.500px;color:#2f2f2f;transform:scaleX(0.8600);">21.45</div>
<div class="t" style="left:865.17px;top:873.56px;font-family:'Liberation Mono', monospace;font-size:22.500px;line-height:22.500px;color:#2f2f2f;transform:scaleX(0.8600);">21.71</div>
<div class="t" style="left:1010.61px;top:873.56px;font-family:'Liberation Mono', monospace;font-size:22.500px;line-height:22.500px;color:#2f2f2f;transform:scaleX(0.8600);">22.18</div>
<div class="t" style="left:1155.28px;top:873.56px;font-family:'Liberation Mono', monospace;font-size:22.500px;line-height:22.500px;color:#2f2f2f;transform:scaleX(0.8600);">24.05</div>
<div class="t" style="left:1299.98px;top:873.56px;font-family:'Liberation Mono', monospace;font-size:22.500px;line-height:22.500px;color:#2f2f2f;transform:scaleX(0.8600);">19.26</div>
<div class="t" style="left:1444.45px;top:873.56px;font-family:'Liberation Mono', monospace;font-size:22.500px;line-height:22.500px;color:#2f2f2f;transform:scaleX(0.8600);">21.04</div>
<div class="t" style="left:95.21px;top:907.46px;font-family:'Liberation Sans', sans-serif;font-size:19.884px;line-height:19.884px;color:#2f2f2f;transform:scaleX(1.0304);">Tea &amp; Coffee</div>
<div class="t" style="left:443.10px;top:907.26px;font-family:'Liberation Mono', monospace;font-size:22.500px;line-height:22.500px;color:#2f2f2f;transform:scaleX(0.8600);">6.85</div>
<div class="t" style="left:587.72px;top:907.26px;font-family:'Liberation Mono', monospace;font-size:22.500px;line-height:22.500px;color:#2f2f2f;transform:scaleX(0.8600);">6.34</div>
<div class="t" style="left:732.40px;top:907.26px;font-family:'Liberation Mono', monospace;font-size:22.500px;line-height:22.500px;color:#2f2f2f;transform:scaleX(0.8600);">7.41</div>
<div class="t" style="left:877.20px;top:907.26px;font-family:'Liberation Mono', monospace;font-size:22.500px;line-height:22.500px;color:#2f2f2f;transform:scaleX(0.8600);">7.45</div>
<div class="t" style="left:1021.91px;top:907.26px;font-family:'Liberation Mono', monospace;font-size:22.500px;line-height:22.500px;color:#2f2f2f;transform:scaleX(0.8600);">8.08</div>
<div class="t" style="left:1166.61px;top:907.26px;font-family:'Liberation Mono', monospace;font-size:22.500px;line-height:22.500px;color:#2f2f2f;transform:scaleX(0.8600);">8.88</div>
<div class="t" style="left:1311.31px;top:907.26px;font-family:'Liberation Mono', monospace;font-size:22.500px;line-height:22.500px;color:#2f2f2f;transform:scaleX(0.8600);">6.82</div>
<div class="t" style="left:1456.01px;top:907.26px;font-family:'Liberation Mono', monospace;font-size:22.500px;line-height:22.500px;color:#2f2f2f;transform:scaleX(0.8600);">7.19</div>
<div class="t" style="left:86.88px;top:942.90px;font-family:'Liberation Sans', sans-serif;font-size:19.608px;line-height:19.608px;color:#2f2f2f;-webkit-text-stroke:0.55px #2f2f2f;transform:scaleX(1.0350);">Water</div>
<div class="t" style="left:431.59px;top:942.46px;font-family:'Liberation Mono', monospace;font-size:22.500px;line-height:22.500px;color:#2f2f2f;-webkit-text-stroke:0.35px #2f2f2f;transform:scaleX(0.8600);">21.00</div>
<div class="t" style="left:575.76px;top:942.46px;font-family:'Liberation Mono', monospace;font-size:22.500px;line-height:22.500px;color:#2f2f2f;-webkit-text-stroke:0.35px #2f2f2f;transform:scaleX(0.8600);">19.11</div>
<div class="t" style="left:721.02px;top:942.46px;font-family:'Liberation Mono', monospace;font-size:22.500px;line-height:22.500px;color:#2f2f2f;-webkit-text-stroke:0.35px #2f2f2f;transform:scaleX(0.8600);">23.13</div>
<div class="t" style="left:865.76px;top:942.46px;font-family:'Liberation Mono', monospace;font-size:22.500px;line-height:22.500px;color:#2f2f2f;-webkit-text-stroke:0.35px #2f2f2f;transform:scaleX(0.8600);">21.56</div>
<div class="t" style="left:1010.46px;top:942.46px;font-family:'Liberation Mono', monospace;font-size:22.500px;line-height:22.500px;color:#2f2f2f;-webkit-text-stroke:0.35px #2f2f2f;transform:scaleX(0.8600);">23.66</div>
<div class="t" style="left:1155.16px;top:942.46px;font-family:'Liberation Mono', monospace;font-size:22.500px;line-height:22.500px;color:#2f2f2f;-webkit-text-stroke:0.35px #2f2f2f;transform:scaleX(0.8600);">24.66</div>
<div class="t" style="left:1299.86px;top:942.46px;font-family:'Liberation Mono', monospace;font-size:22.500px;line-height:22.500px;color:#2f2f2f;-webkit-text-stroke:0.35px #2f2f2f;transform:scaleX(0.8600);">20.26</div>
<div class="t" style="left:1444.49px;top:942.46px;font-family:'Liberation Mono', monospace;font-size:22.500px;line-height:22.500px;color:#2f2f2f;-webkit-text-stroke:0.35px #2f2f2f;transform:scaleX(0.8600);">21.80</div>
<div class="t" style="left:94.13px;top:974.46px;font-family:'Liberation Sans', sans-serif;font-size:19.884px;line-height:19.884px;color:#2f2f2f;transform:scaleX(1.0704);">Mineral Water</div>
<div class="t" style="left:431.81px;top:974.26px;font-family:'Liberation Mono', monospace;font-size:22.500px;line-height:22.500px;color:#2f2f2f;transform:scaleX(0.8600);">17.28</div>
<div class="t" style="left:576.51px;top:974.26px;font-family:'Liberation Mono', monospace;font-size:22.500px;line-height:22.500px;color:#2f2f2f;transform:scaleX(0.8600);">15.48</div>
<div class="t" style="left:721.18px;top:974.26px;font-family:'Liberation Mono', monospace;font-size:22.500px;line-height:22.500px;color:#2f2f2f;transform:scaleX(0.8600);">19.66</div>
<div class="t" style="left:865.65px;top:974.26px;font-family:'Liberation Mono', monospace;font-size:22.500px;line-height:22.500px;color:#2f2f2f;transform:scaleX(0.8600);">18.54</div>
<div class="t" style="left:1010.64px;top:974.26px;font-family:'Liberation Mono', monospace;font-size:22.500px;line-height:22.500px;color:#2f2f2f;transform:scaleX(0.8600);">20.82</div>
<div class="t" style="left:1155.28px;top:974.26px;font-family:'Liberation Mono', monospace;font-size:22.500px;line-height:22.500px;color:#2f2f2f;transform:scaleX(0.8600);">21.35</div>
<div class="t" style="left:1300.04px;top:974.26px;font-family:'Liberation Mono', monospace;font-size:22.500px;line-height:22.500px;color:#2f2f2f;transform:scaleX(0.8600);">16.62</div>
<div class="t" style="left:1444.63px;top:974.26px;font-family:'Liberation Mono', monospace;font-size:22.500px;line-height:22.500px;color:#2f2f2f;transform:scaleX(0.8600);">17.90</div>
<div class="t" style="left:94.21px;top:1007.16px;font-family:'Liberation Sans', sans-serif;font-size:19.884px;line-height:19.884px;color:#2f2f2f;transform:scaleX(1.0503);">Sparkling Water</div>
<div class="t" style="left:443.11px;top:1006.96px;font-family:'Liberation Mono', monospace;font-size:22.500px;line-height:22.500px;color:#2f2f2f;transform:scaleX(0.8600);">3.72</div>
<div class="t" style="left:587.80px;top:1006.96px;font-family:'Liberation Mono', monospace;font-size:22.500px;line-height:22.500px;color:#2f2f2f;transform:scaleX(0.8600);">3.63</div>
<div class="t" style="left:733.07px;top:1006.96px;font-family:'Liberation Mono', monospace;font-size:22.500px;line-height:22.500px;color:#2f2f2f;transform:scaleX(0.8600);">3.47</div>
<div class="t" style="left:877.21px;top:1006.96px;font-family:'Liberation Mono', monospace;font-size:22.500px;line-height:22.500px;color:#2f2f2f;transform:scaleX(0.8600);">3.02</div>
<div class="t" style="left:1021.82px;top:1006.96px;font-family:'Liberation Mono', monospace;font-size:22.500px;line-height:22.500px;color:#2f2f2f;transform:scaleX(0.8600);">2.84</div>
<div class="t" style="left:1166.50px;top:1006.96px;font-family:'Liberation Mono', monospace;font-size:22.500px;line-height:22.500px;color:#2f2f2f;transform:scaleX(0.8600);">3.31</div>
<div class="t" style="left:1311.22px;top:1006.96px;font-family:'Liberation Mono', monospace;font-size:22.500px;line-height:22.500px;color:#2f2f2f;transform:scaleX(0.8600);">3.64</div>
<div class="t" style="left:1456.00px;top:1006.96px;font-family:'Liberation Mono', monospace;font-size:22.500px;line-height:22.500px;color:#2f2f2f;transform:scaleX(0.8600);">3.90</div>
<div class="t" style="left:67.56px;top:1041.40px;font-family:'Liberation Sans', sans-serif;font-size:19.608px;line-height:19.608px;color:#2f2f2f;font-weight:700;transform:scaleX(0.9502);">East</div>
<div class="t" style="left:419.54px;top:1040.96px;font-family:'Liberation Mono', monospace;font-size:22.500px;line-height:22.500px;color:#2f2f2f;font-weight:700;transform:scaleX(0.8600);">181.54</div>
<div class="t" style="left:564.57px;top:1040.96px;font-family:'Liberation Mono', monospace;font-size:22.500px;line-height:22.500px;color:#2f2f2f;font-weight:700;transform:scaleX(0.8600);">156.12</div>
<div class="t" style="left:709.24px;top:1040.96px;font-family:'Liberation Mono', monospace;font-size:22.500px;line-height:22.500px;color:#2f2f2f;font-weight:700;transform:scaleX(0.8600);">208.25</div>
<div class="t" style="left:853.97px;top:1040.96px;font-family:'Liberation Mono', monospace;font-size:22.500px;line-height:22.500px;color:#2f2f2f;font-weight:700;transform:scaleX(0.8600);">201.82</div>
<div class="t" style="left:998.68px;top:1040.96px;font-family:'Liberation Mono', monospace;font-size:22.500px;line-height:22.500px;color:#2f2f2f;font-weight:700;transform:scaleX(0.8600);">216.49</div>
<div class="t" style="left:1143.34px;top:1040.96px;font-family:'Liberation Mono', monospace;font-size:22.500px;line-height:22.500px;color:#2f2f2f;font-weight:700;transform:scaleX(0.8600);">249.98</div>
<div class="t" style="left:1288.04px;top:1040.96px;font-family:'Liberation Mono', monospace;font-size:22.500px;line-height:22.500px;color:#2f2f2f;font-weight:700;transform:scaleX(0.8600);">174.48</div>
<div class="t" style="left:1432.75px;top:1040.96px;font-family:'Liberation Mono', monospace;font-size:22.500px;line-height:22.500px;color:#2f2f2f;font-weight:700;transform:scaleX(0.8600);">195.46</div>
<div class="t" style="left:85.71px;top:1076.90px;font-family:'Liberation Sans', sans-serif;font-size:19.608px;line-height:19.608px;color:#2f2f2f;-webkit-text-stroke:0.55px #2f2f2f;transform:scaleX(1.0090);">Beverages</div>
<div class="t" style="left:419.70px;top:1076.46px;font-family:'Liberation Mono', monospace;font-size:22.500px;line-height:22.500px;color:#2f2f2f;-webkit-text-stroke:0.35px #2f2f2f;transform:scaleX(0.8600);">125.14</div>
<div class="t" style="left:564.55px;top:1076.46px;font-family:'Liberation Mono', monospace;font-size:22.500px;line-height:22.500px;color:#2f2f2f;-webkit-text-stroke:0.35px #2f2f2f;transform:scaleX(0.8600);">100.03</div>
<div class="t" style="left:709.28px;top:1076.46px;font-family:'Liberation Mono', monospace;font-size:22.500px;line-height:22.500px;color:#2f2f2f;-webkit-text-stroke:0.35px #2f2f2f;transform:scaleX(0.8600);">145.92</div>
<div class="t" style="left:853.74px;top:1076.46px;font-family:'Liberation Mono', monospace;font-size:22.500px;line-height:22.500px;color:#2f2f2f;-webkit-text-stroke:0.35px #2f2f2f;transform:scaleX(0.8600);">140.31</div>
<div class="t" style="left:998.66px;top:1076.46px;font-family:'Liberation Mono', monospace;font-size:22.500px;line-height:22.500px;color:#2f2f2f;-webkit-text-stroke:0.35px #2f2f2f;transform:scaleX(0.8600);">151.55</div>
<div class="t" style="left:1143.39px;top:1076.46px;font-family:'Liberation Mono', monospace;font-size:22.500px;line-height:22.500px;color:#2f2f2f;-webkit-text-stroke:0.35px #2f2f2f;transform:scaleX(0.8600);">183.77</div>
<div class="t" style="left:1288.06px;top:1076.46px;font-family:'Liberation Mono', monospace;font-size:22.500px;line-height:22.500px;color:#2f2f2f;-webkit-text-stroke:0.35px #2f2f2f;transform:scaleX(0.8600);">121.26</div>
<div class="t" style="left:1432.73px;top:1076.46px;font-family:'Liberation Mono', monospace;font-size:22.500px;line-height:22.500px;color:#2f2f2f;-webkit-text-stroke:0.35px #2f2f2f;transform:scaleX(0.8600);">137.50</div>
<div class="t" style="left:95.21px;top:1108.16px;font-family:'Liberation Sans', sans-serif;font-size:19.884px;line-height:19.884px;color:#2f2f2f;transform:scaleX(0.9581);">Juices</div>
<div class="t" style="left:431.07px;top:1107.96px;font-family:'Liberation Mono', monospace;font-size:22.500px;line-height:22.500px;color:#2f2f2f;transform:scaleX(0.8600);">66.41</div>
<div class="t" style="left:575.77px;top:1107.96px;font-family:'Liberation Mono', monospace;font-size:22.500px;line-height:22.500px;color:#2f2f2f;transform:scaleX(0.8600);">55.31</div>
<div class="t" style="left:721.24px;top:1107.96px;font-family:'Liberation Mono', monospace;font-size:22.500px;line-height:22.500px;color:#2f2f2f;transform:scaleX(0.8600);">78.32</div>
<div class="t" style="left:865.88px;top:1107.96px;font-family:'Liberation Mono', monospace;font-size:22.500px;line-height:22.500px;color:#2f2f2f;transform:scaleX(0.8600);">67.16</div>
<div class="t" style="left:1010.58px;top:1107.96px;font-family:'Liberation Mono', monospace;font-size:22.500px;line-height:22.500px;color:#2f2f2f;transform:scaleX(0.8600);">71.26</div>
<div class="t" style="left:1155.05px;top:1107.96px;font-family:'Liberation Mono', monospace;font-size:22.500px;line-height:22.500px;color:#2f2f2f;transform:scaleX(0.8600);">85.04</div>
<div class="t" style="left:1299.27px;top:1107.96px;font-family:'Liberation Mono', monospace;font-size:22.500px;line-height:22.500px;color:#2f2f2f;transform:scaleX(0.8600);">63.61</div>
<div class="t" style="left:1444.68px;top:1107.96px;font-family:'Liberation Mono', monospace;font-size:22.500px;line-height:22.500px;color:#2f2f2f;transform:scaleX(0.8600);">72.85</div>
<div class="t" style="left:94.26px;top:1141.16px;font-family:'Liberation Sans', sans-serif;font-size:19.884px;line-height:19.884px;color:#2f2f2f;transform:scaleX(0.9953);">Soda</div>
<div class="t" style="left:431.07px;top:1140.96px;font-family:'Liberation Mono', monospace;font-size:22.500px;line-height:22.500px;color:#2f2f2f;transform:scaleX(0.8600);">46.51</div>
<div class="t" style="left:576.46px;top:1140.96px;font-family:'Liberation Mono', monospace;font-size:22.500px;line-height:22.500px;color:#2f2f2f;transform:scaleX(0.8600);">36.53</div>
<div class="t" style="left:721.22px;top:1140.96px;font-family:'Liberation Mono', monospace;font-size:22.500px;line-height:22.500px;color:#2f2f2f;transform:scaleX(0.8600);">44.89</div>
<div class="t" style="left:865.92px;top:1140.96px;font-family:'Liberation Mono', monospace;font-size:22.500px;line-height:22.500px;color:#2f2f2f;transform:scaleX(0.8600);">57.59</div>
<div class="t" style="left:1010.68px;top:1140.96px;font-family:'Liberation Mono', monospace;font-size:22.500px;line-height:22.500px;color:#2f2f2f;transform:scaleX(0.8600);">56.67</div>
<div class="t" style="left:1155.28px;top:1140.96px;font-family:'Liberation Mono', monospace;font-size:22.500px;line-height:22.500px;color:#2f2f2f;transform:scaleX(0.8600);">75.05</div>
<div class="t" style="left:1300.04px;top:1140.96px;font-family:'Liberation Mono', monospace;font-size:22.500px;line-height:22.500px;color:#2f2f2f;transform:scaleX(0.8600);">47.52</div>
<div class="t" style="left:1444.68px;top:1140.96px;font-family:'Liberation Mono', monospace;font-size:22.500px;line-height:22.500px;color:#2f2f2f;transform:scaleX(0.8600);">50.76</div>
<div class="t" style="left:95.21px;top:1172.66px;font-family:'Liberation Sans', sans-serif;font-size:19.884px;line-height:19.884px;color:#2f2f2f;transform:scaleX(1.0304);">Tea &amp; Coffee</div>
<div class="t" style="left:431.84px;top:1172.46px;font-family:'Liberation Mono', monospace;font-size:22.500px;line-height:22.500px;color:#2f2f2f;transform:scaleX(0.8600);">12.22</div>
<div class="t" style="left:587.81px;top:1172.46px;font-family:'Liberation Mono', monospace;font-size:22.500px;line-height:22.500px;color:#2f2f2f;transform:scaleX(0.8600);">8.19</div>
<div class="t" style="left:720.47px;top:1172.46px;font-family:'Liberation Mono', monospace;font-size:22.500px;line-height:22.500px;color:#2f2f2f;transform:scaleX(0.8600);">22.71</div>
<div class="t" style="left:865.88px;top:1172.46px;font-family:'Liberation Mono', monospace;font-size:22.500px;line-height:22.500px;color:#2f2f2f;transform:scaleX(0.8600);">15.56</div>
<div class="t" style="left:1010.56px;top:1172.46px;font-family:'Liberation Mono', monospace;font-size:22.500px;line-height:22.500px;color:#2f2f2f;transform:scaleX(0.8600);">23.63</div>
<div class="t" style="left:1155.38px;top:1172.46px;font-family:'Liberation Mono', monospace;font-size:22.500px;line-height:22.500px;color:#2f2f2f;transform:scaleX(0.8600);">23.67</div>
<div class="t" style="left:1300.04px;top:1172.46px;font-family:'Liberation Mono', monospace;font-size:22.500px;line-height:22.500px;color:#2f2f2f;transform:scaleX(0.8600);">10.12</div>
<div class="t" style="left:1444.63px;top:1172.46px;font-family:'Liberation Mono', monospace;font-size:22.500px;line-height:22.500px;color:#2f2f2f;transform:scaleX(0.8600);">13.90</div>
<div class="t" style="left:86.88px;top:1207.90px;font-family:'Liberation Sans', sans-serif;font-size:19.608px;line-height:19.608px;color:#2f2f2f;-webkit-text-stroke:0.55px #2f2f2f;transform:scaleX(1.0350);">Water</div>
<div class="t" style="left:431.06px;top:1207.46px;font-family:'Liberation Mono', monospace;font-size:22.500px;line-height:22.500px;color:#2f2f2f;-webkit-text-stroke:0.35px #2f2f2f;transform:scaleX(0.8600);">56.41</div>
<div class="t" style="left:576.38px;top:1207.46px;font-family:'Liberation Mono', monospace;font-size:22.500px;line-height:22.500px;color:#2f2f2f;-webkit-text-stroke:0.35px #2f2f2f;transform:scaleX(0.8600);">56.08</div>
<div class="t" style="left:721.02px;top:1207.46px;font-family:'Liberation Mono', monospace;font-size:22.500px;line-height:22.500px;color:#2f2f2f;-webkit-text-stroke:0.35px #2f2f2f;transform:scaleX(0.8600);">62.33</div>
<div class="t" style="left:865.81px;top:1207.46px;font-family:'Liberation Mono', monospace;font-size:22.500px;line-height:22.500px;color:#2f2f2f;-webkit-text-stroke:0.35px #2f2f2f;transform:scaleX(0.8600);">61.52</div>
<div class="t" style="left:1010.42px;top:1207.46px;font-family:'Liberation Mono', monospace;font-size:22.500px;line-height:22.500px;color:#2f2f2f;-webkit-text-stroke:0.35px #2f2f2f;transform:scaleX(0.8600);">64.93</div>
<div class="t" style="left:1155.09px;top:1207.46px;font-family:'Liberation Mono', monospace;font-size:22.500px;line-height:22.500px;color:#2f2f2f;-webkit-text-stroke:0.35px #2f2f2f;transform:scaleX(0.8600);">66.20</div>
<div class="t" style="left:1299.82px;top:1207.46px;font-family:'Liberation Mono', monospace;font-size:22.500px;line-height:22.500px;color:#2f2f2f;-webkit-text-stroke:0.35px #2f2f2f;transform:scaleX(0.8600);">53.23</div>
<div class="t" style="left:1444.56px;top:1207.46px;font-family:'Liberation Mono', monospace;font-size:22.500px;line-height:22.500px;color:#2f2f2f;-webkit-text-stroke:0.35px #2f2f2f;transform:scaleX(0.8600);">57.96</div>
<!-- dialog -->
<div class="r" style="left:535.00px;top:305.50px;width:1234.00px;height:684.50px;background:#fff;box-shadow:0 0 12px rgba(0,0,0,0.22), 0 4px 10px rgba(0,0,0,0.10);"></div>
<div class="r" style="left:563.00px;top:410.00px;width:1176.50px;height:57.30px;background:#f4f4f4;"></div>
<div class="r" style="left:1193.30px;top:418.80px;width:536.20px;height:38.80px;background:#fff;box-sizing:border-box;border:1.2px solid #cfcfcf;"></div>
<div class="r" style="left:563.00px;top:511.60px;width:1176.50px;height:1.40px;background:#e4e4e4;"></div>
<div class="r" style="left:563.00px;top:551.40px;width:1176.50px;height:1.40px;background:#e4e4e4;"></div>
<div class="r" style="left:563.00px;top:591.00px;width:1176.50px;height:1.40px;background:#e4e4e4;"></div>
<div class="r" style="left:563.00px;top:631.30px;width:1176.50px;height:1.40px;background:#e4e4e4;"></div>
<div class="r" style="left:635.60px;top:467.30px;width:1.30px;height:385.30px;background:#e4e4e4;"></div>
<div class="r" style="left:907.00px;top:467.30px;width:1.30px;height:385.30px;background:#e4e4e4;"></div>
<div class="r" style="left:1178.30px;top:467.30px;width:1.30px;height:385.30px;background:#e4e4e4;"></div>
<div class="r" style="left:1450.20px;top:467.30px;width:1.30px;height:385.30px;background:#e4e4e4;"></div>
<div class="r" style="left:1721.60px;top:467.30px;width:1.30px;height:385.30px;background:#e4e4e4;"></div>
<div class="r" style="left:635.40px;top:670.90px;width:1.70px;height:1.20px;background:#fff;"></div>
<div class="r" style="left:906.80px;top:670.90px;width:1.70px;height:1.20px;background:#fff;"></div>
<div class="r" style="left:1178.10px;top:670.90px;width:1.70px;height:1.20px;background:#fff;"></div>
<div class="r" style="left:1450.00px;top:670.90px;width:1.70px;height:1.20px;background:#fff;"></div>
<div class="r" style="left:1721.40px;top:670.90px;width:1.70px;height:1.20px;background:#fff;"></div>
<div class="r" style="left:635.40px;top:710.90px;width:1.70px;height:1.20px;background:#fff;"></div>
<div class="r" style="left:906.80px;top:710.90px;width:1.70px;height:1.20px;background:#fff;"></div>
<div class="r" style="left:1178.10px;top:710.90px;width:1.70px;height:1.20px;background:#fff;"></div>
<div class="r" style="left:1450.00px;top:710.90px;width:1.70px;height:1.20px;background:#fff;"></div>
<div class="r" style="left:1721.40px;top:710.90px;width:1.70px;height:1.20px;background:#fff;"></div>
<div class="r" style="left:635.40px;top:750.90px;width:1.70px;height:1.20px;background:#fff;"></div>
<div class="r" style="left:906.80px;top:750.90px;width:1.70px;height:1.20px;background:#fff;"></div>
<div class="r" style="left:1178.10px;top:750.90px;width:1.70px;height:1.20px;background:#fff;"></div>
<div class="r" style="left:1450.00px;top:750.90px;width:1.70px;height:1.20px;background:#fff;"></div>
<div class="r" style="left:1721.40px;top:750.90px;width:1.70px;height:1.20px;background:#fff;"></div>
<div class="r" style="left:635.40px;top:790.90px;width:1.70px;height:1.20px;background:#fff;"></div>
<div class="r" style="left:906.80px;top:790.90px;width:1.70px;height:1.20px;background:#fff;"></div>
<div class="r" style="left:1178.10px;top:790.90px;width:1.70px;height:1.20px;background:#fff;"></div>
<div class="r" style="left:1450.00px;top:790.90px;width:1.70px;height:1.20px;background:#fff;"></div>
<div class="r" style="left:1721.40px;top:790.90px;width:1.70px;height:1.20px;background:#fff;"></div>
<div class="r" style="left:635.40px;top:830.90px;width:1.70px;height:1.20px;background:#fff;"></div>
<div class="r" style="left:906.80px;top:830.90px;width:1.70px;height:1.20px;background:#fff;"></div>
<div class="r" style="left:1178.10px;top:830.90px;width:1.70px;height:1.20px;background:#fff;"></div>
<div class="r" style="left:1450.00px;top:830.90px;width:1.70px;height:1.20px;background:#fff;"></div>
<div class="r" style="left:1721.40px;top:830.90px;width:1.70px;height:1.20px;background:#fff;"></div>
<div class="r" style="left:1737.30px;top:483.60px;width:2.10px;height:14.90px;background:#2f2f2f;"></div>
<div class="r" style="left:1055.00px;top:852.80px;width:684.40px;height:11.80px;background:#fbfbfb;box-sizing:border-box;border:1px solid #efefef;border-radius:6px;"></div>
<div class="r" style="left:563.00px;top:852.60px;width:497.30px;height:13.00px;background:#a9a9a9;border-radius:6.5px;"></div>
<div class="r" style="left:563.00px;top:866.00px;width:1176.50px;height:35.50px;background:#f4f4f4;"></div>
<div class="r" style="left:1475.70px;top:919.30px;width:123.00px;height:49.50px;background:#f3f3f3;"></div>
<div class="r" style="left:1616.20px;top:919.00px;width:123.40px;height:49.80px;background:#0078d4;"></div>
<svg class="ov" width="2304" height="1294" viewBox="0 0 2304 1294">
<line x1="1719.20" y1="350.20" x2="1738.70" y2="369.70" stroke="#333" stroke-width="2.00" stroke-linecap="butt"/>
<line x1="1738.70" y1="350.20" x2="1719.20" y2="369.70" stroke="#333" stroke-width="2.00" stroke-linecap="butt"/>
<line x1="617.80" y1="427.30" x2="617.80" y2="448.90" stroke="#333" stroke-width="1.60" stroke-linecap="butt"/>
<line x1="607.00" y1="438.10" x2="628.70" y2="438.10" stroke="#333" stroke-width="1.60" stroke-linecap="butt"/>
<path d="M775.5,431 H790 M776.8,431 L777.8,448 H787.8 L788.8,431 M780.5,431 V428 H785 V431" fill="none" stroke="#a8a8a8" stroke-width="1.4"/>
<line x1="780.50" y1="434.00" x2="780.50" y2="445.50" stroke="#a8a8a8" stroke-width="1.00" stroke-linecap="butt"/>
<line x1="782.80" y1="434.00" x2="782.80" y2="445.50" stroke="#a8a8a8" stroke-width="1.00" stroke-linecap="butt"/>
<line x1="785.10" y1="434.00" x2="785.10" y2="445.50" stroke="#a8a8a8" stroke-width="1.00" stroke-linecap="butt"/>
<path d="M933.5,434 V429 H952 V434" fill="none" stroke="#333" stroke-width="1.5"/>
<line x1="942.70" y1="432.00" x2="942.70" y2="446.00" stroke="#333" stroke-width="1.50" stroke-linecap="butt"/>
<polyline points="938,441.5 942.7,446.2 947.4,441.5" fill="none" stroke="#333" stroke-width="1.5"/>
<path d="M1071.8,439 V446 H1089.7 V439" fill="none" stroke="#333" stroke-width="1.5"/>
<line x1="1080.70" y1="430.50" x2="1080.70" y2="442.00" stroke="#333" stroke-width="1.50" stroke-linecap="butt"/>
<polyline points="1076,435 1080.7,430.3 1085.4,435" fill="none" stroke="#333" stroke-width="1.5"/>
<circle cx="1217.6" cy="434.9" r="6.3" fill="none" stroke="#444" stroke-width="1.4"/>
<line x1="1213.30" y1="439.30" x2="1203.50" y2="448.60" stroke="#444" stroke-width="1.40" stroke-linecap="butt"/>
<rect x="607.6" y="479.70" width="19.8" height="19.8" rx="2" fill="#fff" stroke="#666" stroke-width="1.5"/>
<rect x="607.6" y="521.50" width="19.8" height="19.8" rx="2" fill="#fff" stroke="#666" stroke-width="1.5"/>
<rect x="607.6" y="561.40" width="19.8" height="19.8" rx="2" fill="#fff" stroke="#666" stroke-width="1.5"/>
<rect x="607.6" y="601.50" width="19.8" height="19.8" rx="2" fill="#fff" stroke="#666" stroke-width="1.5"/>
</svg>
<div class="t" style="left:563.63px;top:340.60px;font-family:'Liberation Sans', sans-serif;font-size:37.558px;line-height:37.558px;color:#2f2f2f;transform:scaleX(0.9563);">Translate</div>
<div class="t" style="left:641.03px;top:428.46px;font-family:'Liberation Sans', sans-serif;font-size:20.712px;line-height:20.712px;color:#333;transform:scaleX(0.9899);">Add New</div>
<div class="t" style="left:804.38px;top:428.46px;font-family:'Liberation Sans', sans-serif;font-size:20.712px;line-height:20.712px;color:#a6a6a6;transform:scaleX(1.0600);">Delete</div>
<div class="t" style="left:969.79px;top:428.46px;font-family:'Liberation Sans', sans-serif;font-size:20.712px;line-height:20.712px;color:#333;transform:scaleX(1.0879);">Import</div>
<div class="t" style="left:1107.11px;top:428.46px;font-family:'Liberation Sans', sans-serif;font-size:20.712px;line-height:20.712px;color:#333;transform:scaleX(1.0428);">Export</div>
<div class="t" style="left:1243.97px;top:429.16px;font-family:'Liberation Sans', sans-serif;font-size:20.712px;line-height:20.712px;color:#777;transform:scaleX(1.0723);">Search key…</div>
<div class="t" style="left:649.88px;top:480.40px;font-family:'Liberation Sans', sans-serif;font-size:20.436px;line-height:20.436px;color:#2f2f2f;-webkit-text-stroke:0.65px #2f2f2f;transform:scaleX(0.9329);">Key</div>
<div class="t" style="left:921.29px;top:480.40px;font-family:'Liberation Sans', sans-serif;font-size:20.436px;line-height:20.436px;color:#2f2f2f;-webkit-text-stroke:0.65px #2f2f2f;transform:scaleX(1.0257);">English</div>
<div class="t" style="left:1192.77px;top:481.20px;font-family:'Liberation Sans', sans-serif;font-size:20.436px;line-height:20.436px;color:#2f2f2f;-webkit-text-stroke:0.65px #2f2f2f;transform:scaleX(1.0357);">German</div>
<div class="t" style="left:1464.20px;top:481.20px;font-family:'Liberation Sans', sans-serif;font-size:20.436px;line-height:20.436px;color:#2f2f2f;-webkit-text-stroke:0.65px #2f2f2f;transform:scaleX(1.0074);">French</div>
<div class="t" style="left:651.74px;top:522.63px;font-family:'Liberation Sans', sans-serif;font-size:20.988px;line-height:20.988px;color:#333;transform:scaleX(1.0403);">Availability</div>
<div class="t" style="left:651.02px;top:562.23px;font-family:'Liberation Sans', sans-serif;font-size:20.988px;line-height:20.988px;color:#333;transform:scaleX(0.9200);">Yes</div>
<div class="t" style="left:649.87px;top:602.53px;font-family:'Liberation Sans', sans-serif;font-size:20.988px;line-height:20.988px;color:#333;transform:scaleX(1.0630);">No</div>
<div class="t" style="left:1194.33px;top:522.43px;font-family:'Liberation Sans', sans-serif;font-size:20.988px;line-height:20.988px;color:#333;transform:scaleX(1.0067);">Verfügbarkeit</div>
<div class="t" style="left:1194.30px;top:562.23px;font-family:'Liberation Sans', sans-serif;font-size:20.988px;line-height:20.988px;color:#333;transform:scaleX(0.9200);">Ja</div>
<div class="t" style="left:1192.47px;top:602.53px;font-family:'Liberation Sans', sans-serif;font-size:20.988px;line-height:20.988px;color:#333;transform:scaleX(1.0630);">Nein</div>
<div class="t" style="left:1464.17px;top:522.43px;font-family:'Liberation Sans', sans-serif;font-size:20.988px;line-height:20.988px;color:#333;transform:scaleX(1.0651);">Disponibilité</div>
<div class="t" style="left:1465.04px;top:562.23px;font-family:'Liberation Sans', sans-serif;font-size:20.988px;line-height:20.988px;color:#333;transform:scaleX(1.0509);">Oui</div>
<div class="t" style="left:1464.17px;top:602.53px;font-family:'Liberation Sans', sans-serif;font-size:20.988px;line-height:20.988px;color:#333;transform:scaleX(1.0629);">Non</div>
<div class="t" style="left:1599.51px;top:875.07px;font-family:'Liberation Sans', sans-serif;font-size:17.398px;line-height:17.398px;color:#333;transform:scaleX(0.9715);">Total Rows: 3</div>
<div class="t" style="left:1507.57px;top:934.76px;font-family:'Liberation Sans', sans-serif;font-size:19.884px;line-height:19.884px;color:#333;-webkit-text-stroke:0.15px #333;transform:scaleX(0.9571);">Cancel</div>
<div class="t" style="left:1657.96px;top:933.27px;font-family:'Liberation Sans', sans-serif;font-size:19.055px;line-height:19.055px;color:#fff;font-weight:700;transform:scaleX(0.9200);">Save</div>
<!-- footer -->
<div class="r" style="left:3.00px;top:1242.00px;width:2297.00px;height:1.80px;background:#e4e4e4;"></div>
<div class="r" style="left:1636.60px;top:1253.40px;width:98.70px;height:35.20px;background:#fff;box-sizing:border-box;border:1.3px solid #ababab;"></div>
<div class="r" style="left:1904.60px;top:1248.00px;width:44.00px;height:35.60px;background:#fff;box-sizing:border-box;border:1.3px solid #dedede;"></div>
<div class="r" style="left:2270.00px;top:1251.40px;width:6.10px;height:5.90px;background:#cccccc;"></div>
<div class="r" style="left:2270.00px;top:1263.50px;width:6.10px;height:5.90px;background:#cccccc;"></div>
<div class="r" style="left:2269.00px;top:1274.50px;width:8.00px;height:7.60px;background:#ff3333;"></div>
<div class="r" style="left:2282.00px;top:1251.40px;width:6.20px;height:5.90px;background:#cccccc;"></div>
<div class="r" style="left:2281.00px;top:1262.30px;width:8.00px;height:19.80px;background:#ffb000;"></div>
<div class="r" style="left:2293.20px;top:1250.50px;width:7.00px;height:31.60px;background:#55cc44;"></div>
<svg class="ov" width="2304" height="1294" viewBox="0 0 2304 1294">
<path d="M1579.89,1265.45 L1583.63,1266.19 L1583.63,1270.61 L1579.89,1271.35 L1578.93,1273.66 L1581.06,1276.82 L1577.92,1279.96 L1574.76,1277.83 L1572.45,1278.79 L1571.71,1282.53 L1567.29,1282.53 L1566.55,1278.79 L1564.24,1277.83 L1561.08,1279.96 L1557.94,1276.82 L1560.07,1273.66 L1559.11,1271.35 L1555.37,1270.61 L1555.37,1266.19 L1559.11,1265.45 L1560.07,1263.14 L1557.94,1259.98 L1561.08,1256.84 L1564.24,1258.97 L1566.55,1258.01 L1567.29,1254.27 L1571.71,1254.27 L1572.45,1258.01 L1574.76,1258.97 L1577.92,1256.84 L1581.06,1259.98 L1578.93,1263.14 Z" fill="none" stroke="#444" stroke-width="1.40" stroke-linejoin="round"/>
<circle cx="1569.50" cy="1268.40" r="5.30" fill="none" stroke="#1c55ad" stroke-width="1.60"/>
<line x1="1603.80" y1="1268.80" x2="1621.40" y2="1268.80" stroke="#333" stroke-width="2.00" stroke-linecap="butt"/>
<line x1="1747.00" y1="1269.90" x2="1766.00" y2="1269.90" stroke="#333" stroke-width="2.00" stroke-linecap="butt"/>
<line x1="1756.50" y1="1260.60" x2="1756.50" y2="1279.20" stroke="#333" stroke-width="2.00" stroke-linecap="butt"/>
<line x1="1802.80" y1="1258.20" x2="1802.80" y2="1275.40" stroke="#a6a6a6" stroke-width="3.40" stroke-linecap="butt"/>
<polyline points="1818.6,1259.2 1810.5,1266.8 1818.6,1274.4" fill="none" stroke="#a6a6a6" stroke-width="3"/>
<polyline points="1840.8,1259.2 1832.7,1266.8 1840.8,1274.4" fill="none" stroke="#a6a6a6" stroke-width="3"/>
<polyline points="2004.7,1259.2 2012.8,1266.8 2004.7,1274.4" fill="none" stroke="#2f2f2f" stroke-width="3"/>
<polyline points="2027.2,1259.2 2035.3,1266.8 2027.2,1274.4" fill="none" stroke="#2f2f2f" stroke-width="3"/>
<line x1="2042.20" y1="1258.20" x2="2042.20" y2="1275.40" stroke="#2f2f2f" stroke-width="3.40" stroke-linecap="butt"/>
</svg>
<div class="t" style="left:4.20px;top:1256.20px;font-family:'Liberation Sans', sans-serif;font-size:21.265px;line-height:21.265px;color:#333;transform:scaleX(0.9597);">Total Rows: 49</div>
<div class="t" style="left:1658.98px;top:1259.31px;font-family:'Liberation Mono', monospace;font-size:25.441px;line-height:25.441px;color:#333;transform:scaleX(0.7902);">100</div>
<div class="t" style="left:1696.26px;top:1257.61px;font-family:'Liberation Sans', sans-serif;font-size:23.256px;line-height:23.256px;color:#333;transform:scaleX(0.9200);">%</div>
<div class="t" style="left:1851.92px;top:1256.33px;font-family:'Liberation Sans', sans-serif;font-size:20.988px;line-height:20.988px;color:#2f2f2f;transform:scaleX(0.9200);">Page</div>
<div class="t" style="left:1920.60px;top:1255.39px;font-family:'Liberation Sans', sans-serif;font-size:22.093px;line-height:22.093px;color:#2f2f2f;transform:scaleX(0.9452);">1</div>
<div class="t" style="left:1956.85px;top:1256.33px;font-family:'Liberation Sans', sans-serif;font-size:20.988px;line-height:20.988px;color:#2f2f2f;transform:scaleX(1.0235);">of 3</div>
<div class="t" style="left:2129.80px;top:1254.70px;font-family:'Liberation Sans', sans-serif;font-size:22.674px;line-height:22.674px;color:#2f2f2f;transform:scaleX(0.9329);">1</div>
<div class="t" style="left:2151.42px;top:1255.66px;font-family:'Liberation Sans', sans-serif;font-size:21.541px;line-height:21.541px;color:#2f2f2f;transform:scaleX(1.0625);">to</div>
<div class="t" style="left:2179.70px;top:1255.66px;font-family:'Liberation Sans', sans-serif;font-size:21.541px;line-height:21.541px;color:#2f2f2f;transform:scaleX(0.9837);">23</div>
<div class="t" style="left:2212.09px;top:1255.66px;font-family:'Liberation Sans', sans-serif;font-size:21.541px;line-height:21.541px;color:#2f2f2f;transform:scaleX(1.0736);">of</div>
<div class="t" style="left:2241.20px;top:1255.66px;font-family:'Liberation Sans', sans-serif;font-size:21.541px;line-height:21.541px;color:#2f2f2f;transform:scaleX(0.9678);">49</div>
</div></body></html>
